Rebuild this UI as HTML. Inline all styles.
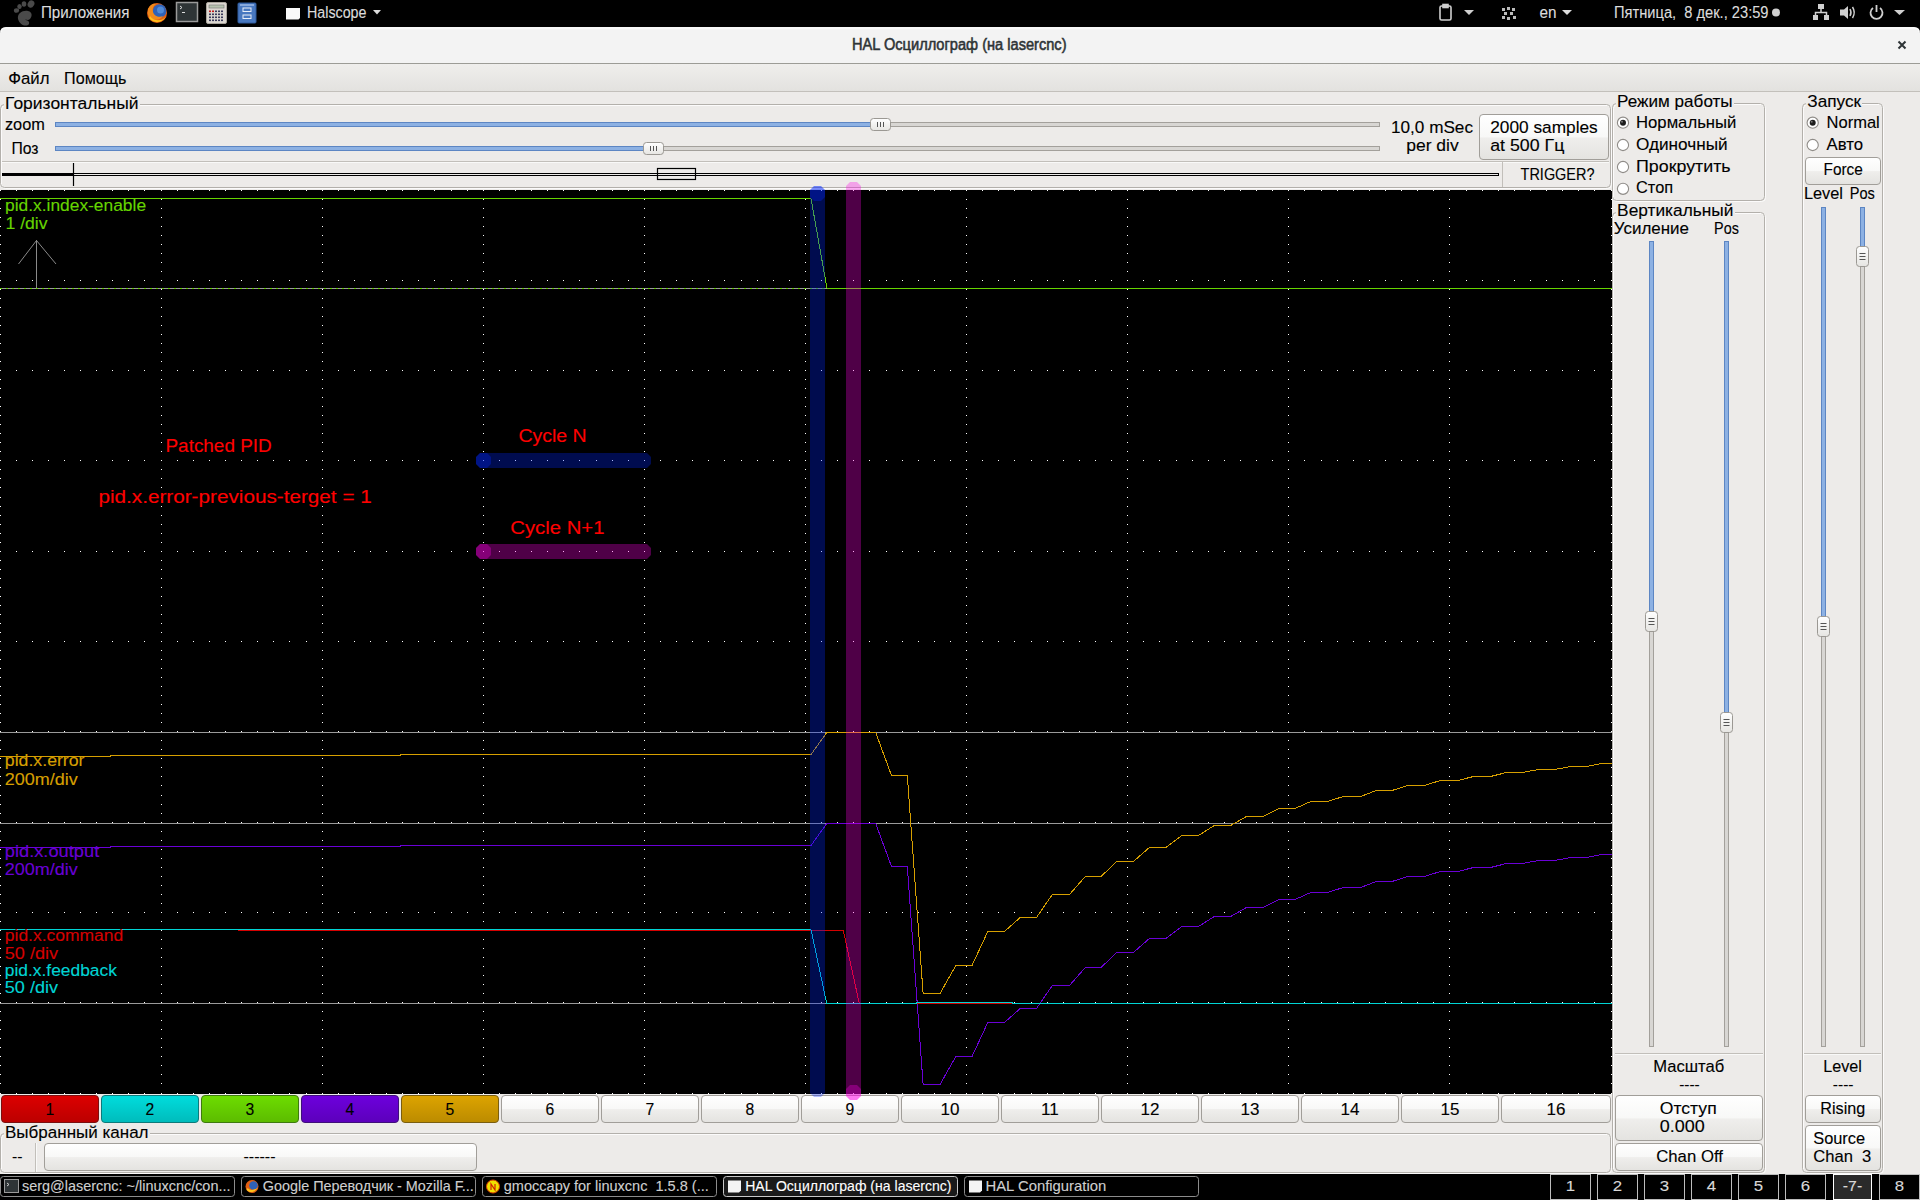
<!DOCTYPE html>
<html><head><meta charset="utf-8"><title>HAL Осциллограф</title>
<style>html,body{margin:0;padding:0;background:#000;overflow:hidden}svg{display:block;font-family:"Liberation Sans",sans-serif}</style>
</head><body>
<svg width="1920" height="1200" viewBox="0 0 1920 1200" shape-rendering="auto">
<defs>
<linearGradient id="gbtn" x1="0" y1="0" x2="0" y2="1">
 <stop offset="0" stop-color="#ffffff"/><stop offset="0.5" stop-color="#f8f8f7"/>
 <stop offset="0.52" stop-color="#efeeec"/><stop offset="1" stop-color="#e4e3e0"/></linearGradient>
<linearGradient id="ghandle" x1="0" y1="0" x2="0" y2="1">
 <stop offset="0" stop-color="#ffffff"/><stop offset="1" stop-color="#e6e5e2"/></linearGradient>
<linearGradient id="gmenu" x1="0" y1="0" x2="0" y2="1">
 <stop offset="0" stop-color="#efeeec"/><stop offset="1" stop-color="#e3e2df"/></linearGradient>
<linearGradient id="gc1" x1="0" y1="0" x2="0" y2="1"><stop offset="0" stop-color="#dd0000"/><stop offset="1" stop-color="#bb0000"/></linearGradient>
<linearGradient id="gc2" x1="0" y1="0" x2="0" y2="1"><stop offset="0" stop-color="#00dddd"/><stop offset="1" stop-color="#00bbbb"/></linearGradient>
<linearGradient id="gc3" x1="0" y1="0" x2="0" y2="1"><stop offset="0" stop-color="#6ddd00"/><stop offset="1" stop-color="#5cbb00"/></linearGradient>
<linearGradient id="gc4" x1="0" y1="0" x2="0" y2="1"><stop offset="0" stop-color="#6d00dd"/><stop offset="1" stop-color="#5c00bb"/></linearGradient>
<linearGradient id="gc5" x1="0" y1="0" x2="0" y2="1"><stop offset="0" stop-color="#dda400"/><stop offset="1" stop-color="#bb8b00"/></linearGradient>
</defs>
<rect x="0" y="0" width="1920" height="27" fill="#000" />
<g fill="#4a4a4a"><ellipse cx="16.5" cy="10.5" rx="2.6" ry="2.3"/><ellipse cx="19.5" cy="6.5" rx="2.2" ry="2.6"/><ellipse cx="24" cy="4" rx="2.3" ry="2.7"/><ellipse cx="31" cy="4" rx="3.2" ry="3.8" transform="rotate(30 31 4)"/><path d="M18 19 C17 13 23 10 28 11 C33 12 32 17 30 19 C28 21 26 19 25 20 C27 20 30 21 29 24 C27 27 20 26 18 19 Z"/></g>
<text x="41.00" y="18.00" font-size="16" fill="#dcdcdc" stroke="#dcdcdc" stroke-width="0.12" textLength="88.51" lengthAdjust="spacingAndGlyphs" style="white-space:pre" >Приложения</text>
<circle cx="157" cy="13" r="10" fill="#e35f12"/><circle cx="159.5" cy="11" r="6.8" fill="#2f62b8"/><circle cx="160.5" cy="10" r="3.5" fill="#4f8ad8"/><path d="M148 9 C150 4 154 3 156 4 C153 6 152 9 153 12 C154 16 159 18 163 16 C160 21 151 21 148 15 Z" fill="#f08a1c"/><path d="M149 18 C153 23 161 24 166 17 C162 21 154 22 150 16Z" fill="#ffc21a"/>
<rect x="176.5" y="2.5" width="21" height="19" fill="#2e3436" stroke="#9a9a9a" stroke-width="1.5"/><path d="M180 6 L182 7.5 L180 9" stroke="#ddd" fill="none"/><line x1="182" y1="12.5" x2="185" y2="12.5" stroke="#ddd"/>
<rect x="206.5" y="2.5" width="20" height="21" rx="1.5" fill="#dcd8d2" stroke="#a9a49c"/><rect x="209" y="5" width="15" height="3" fill="#b7c3b0" stroke="#777" stroke-width="0.6"/>
<rect x="209" y="10.5" width="2" height="1.6" fill="#c01818"/>
<rect x="212" y="10.5" width="2" height="1.6" fill="#c01818"/>
<rect x="215" y="10.5" width="2" height="1.6" fill="#3a3a5a"/>
<rect x="218" y="10.5" width="2" height="1.6" fill="#3a3a5a"/>
<rect x="221" y="10.5" width="2" height="1.6" fill="#3a3a5a"/>
<rect x="209" y="13.5" width="2" height="1.6" fill="#3a3a5a"/>
<rect x="212" y="13.5" width="2" height="1.6" fill="#3a3a5a"/>
<rect x="215" y="13.5" width="2" height="1.6" fill="#3a3a5a"/>
<rect x="218" y="13.5" width="2" height="1.6" fill="#3a3a5a"/>
<rect x="221" y="13.5" width="2" height="1.6" fill="#3a3a5a"/>
<rect x="209" y="16.5" width="2" height="1.6" fill="#3a3a5a"/>
<rect x="212" y="16.5" width="2" height="1.6" fill="#3a3a5a"/>
<rect x="215" y="16.5" width="2" height="1.6" fill="#3a3a5a"/>
<rect x="218" y="16.5" width="2" height="1.6" fill="#3a3a5a"/>
<rect x="221" y="16.5" width="2" height="1.6" fill="#3a3a5a"/>
<rect x="209" y="19.5" width="2" height="1.6" fill="#3a3a5a"/>
<rect x="212" y="19.5" width="2" height="1.6" fill="#3a3a5a"/>
<rect x="215" y="19.5" width="2" height="1.6" fill="#3a3a5a"/>
<rect x="218" y="19.5" width="2" height="1.6" fill="#3a3a5a"/>
<rect x="221" y="19.5" width="2" height="1.6" fill="#3a3a5a"/>
<rect x="238" y="3" width="18" height="20" rx="1" fill="#4878c0" stroke="#2e5a9c"/><rect x="240" y="4" width="14" height="2" fill="#86a8dc"/><rect x="243" y="8" width="8" height="3.5" fill="none" stroke="#e8eef8"/><rect x="243" y="15" width="8" height="3.5" fill="none" stroke="#e8eef8"/>
<path d="M286 8 H300 V18 L298.5 19.5 H286 Z" fill="#fafafa"/>
<text x="307.00" y="18.00" font-size="16" fill="#dcdcdc" stroke="#dcdcdc" stroke-width="0.12" textLength="59.50" lengthAdjust="spacingAndGlyphs" style="white-space:pre" >Halscope</text>
<path d="M373 10 H381 L377 14.5 Z" fill="#dcdcdc"/>
<g fill="none" stroke="#cfcfcf" stroke-width="1.6"><rect x="1440" y="6" width="11" height="14" rx="1.5"/><rect x="1443" y="4.5" width="5" height="3" fill="#cfcfcf"/></g>
<path d="M1464 10 H1474 L1469 15 Z" fill="#cfcfcf"/>
<rect x="1502" y="8" width="3" height="3" fill="#bbbbbb" />
<rect x="1507" y="7" width="3" height="3" fill="#bbbbbb" />
<rect x="1512" y="8" width="3" height="3" fill="#bbbbbb" />
<rect x="1504" y="12" width="3" height="3" fill="#bbbbbb" />
<rect x="1510" y="12" width="3" height="3" fill="#bbbbbb" />
<rect x="1502" y="16" width="3" height="3" fill="#bbbbbb" />
<rect x="1507" y="17" width="3" height="3" fill="#bbbbbb" />
<rect x="1513" y="16" width="3" height="3" fill="#bbbbbb" />
<text x="1539.50" y="18.00" font-size="16" fill="#dcdcdc" stroke="#dcdcdc" stroke-width="0.12" textLength="17.00" lengthAdjust="spacingAndGlyphs" style="white-space:pre" >en</text>
<path d="M1562 10 H1572 L1567 15 Z" fill="#dcdcdc"/>
<text x="1614.00" y="18.00" font-size="16" fill="#dcdcdc" stroke="#dcdcdc" stroke-width="0.12" textLength="154.52" lengthAdjust="spacingAndGlyphs" style="white-space:pre" >Пятница,  8 дек., 23:59</text>
<circle cx="1776" cy="12.5" r="4" fill="#d0d0d0"/>
<g fill="#d0d0d0"><rect x="1818" y="4" width="6" height="5"/><rect x="1813" y="15" width="5" height="5"/><rect x="1824" y="15" width="5" height="5"/></g><path d="M1821 9 V12.5 M1815.5 15 V12.5 H1826.5 V15" stroke="#d0d0d0" fill="none" stroke-width="1.5"/>
<path d="M1840 9.5 H1844 L1848 6 V19 L1844 15.5 H1840Z" fill="#d0d0d0"/><path d="M1850 9 Q1852 12.5 1850 16 M1852.5 7 Q1856 12.5 1852.5 18" stroke="#d0d0d0" fill="none" stroke-width="1.5"/>
<path d="M1873 8 A6 6 0 1 0 1880 8" stroke="#d0d0d0" fill="none" stroke-width="1.8"/><line x1="1876.5" y1="5" x2="1876.5" y2="12" stroke="#d0d0d0" stroke-width="1.8"/>
<path d="M1894 10 H1905 L1899.5 15 Z" fill="#d0d0d0"/>
<rect x="0" y="63" width="1920" height="1111" fill="#edebe9" />
<path d="M0 33 Q0 27 6 27 H1914 Q1920 27 1920 33 V63 H0 Z" fill="#f3f3f3"/>
<path d="M1 32 Q1 28 6 28 H1914 Q1919 28 1919 32" stroke="#ffffff" fill="none"/>
<line x1="0" y1="63.5" x2="1920" y2="63.5" stroke="#9c9c96" stroke-width="1" />
<text x="852.00" y="50.30" font-size="16" fill="#2e3436" stroke="#2e3436" stroke-width="0.55" textLength="214.53" lengthAdjust="spacingAndGlyphs" style="white-space:pre" >HAL Осциллограф (на lasercnc)</text>
<path d="M1898.5 41.5 L1905.5 48.5 M1905.5 41.5 L1898.5 48.5" stroke="#2e3436" stroke-width="2"/>
<rect x="0" y="64" width="1920" height="27" fill="url(#gmenu)" />
<line x1="0" y1="91.5" x2="1920" y2="91.5" stroke="#c3c0bb" stroke-width="1" />
<text x="8.25" y="83.75" font-size="17" fill="#000" stroke="#000" stroke-width="0.12" textLength="41.25" lengthAdjust="spacingAndGlyphs" style="white-space:pre" >Файл</text>
<text x="64.10" y="83.75" font-size="17" fill="#000" stroke="#000" stroke-width="0.12" textLength="62.36" lengthAdjust="spacingAndGlyphs" style="white-space:pre" >Помощь</text>
<rect x="1.5" y="105.5" width="1610.0" height="83.0" rx="4" fill="none" stroke="#fff" opacity="0.8"/>
<rect x="0.5" y="104.5" width="1610.0" height="83.0" rx="4" fill="none" stroke="#b3b0ab"/>
<rect x="4" y="95" width="136" height="12" fill="#edebe9" />
<text x="5.10" y="108.75" font-size="17" fill="#000" stroke="#000" stroke-width="0.12" textLength="133.45" lengthAdjust="spacingAndGlyphs" style="white-space:pre" >Горизонтальный</text>
<text x="4.90" y="130.00" font-size="17" fill="#000" stroke="#000" stroke-width="0.12" textLength="39.97" lengthAdjust="spacingAndGlyphs" style="white-space:pre" >zoom</text>
<text x="11.50" y="153.75" font-size="17" fill="#000" stroke="#000" stroke-width="0.12" textLength="27.08" lengthAdjust="spacingAndGlyphs" style="white-space:pre" >Поз</text>
<rect x="55.5" y="122.5" width="1324.0" height="4" fill="#d8d6d3" stroke="#a3a09b"/>
<rect x="55.5" y="122.5" width="815.0" height="4" fill="#8db1e3" stroke="#5d86c3"/>
<rect x="870.5" y="118.5" width="20.0" height="12.0" rx="3" fill="url(#ghandle)" stroke="#9b9893"/>
<line x1="877.5" y1="122" x2="877.5" y2="127" stroke="#555" stroke-width="1" />
<line x1="880.5" y1="122" x2="880.5" y2="127" stroke="#555" stroke-width="1" />
<line x1="883.5" y1="122" x2="883.5" y2="127" stroke="#555" stroke-width="1" />
<rect x="55.5" y="146.5" width="1324.0" height="4" fill="#d8d6d3" stroke="#a3a09b"/>
<rect x="55.5" y="146.5" width="588.0" height="4" fill="#8db1e3" stroke="#5d86c3"/>
<rect x="643.5" y="142.5" width="20.0" height="12.0" rx="3" fill="url(#ghandle)" stroke="#9b9893"/>
<line x1="650.5" y1="146" x2="650.5" y2="151" stroke="#555" stroke-width="1" />
<line x1="653.5" y1="146" x2="653.5" y2="151" stroke="#555" stroke-width="1" />
<line x1="656.5" y1="146" x2="656.5" y2="151" stroke="#555" stroke-width="1" />
<text x="1391.00" y="133.00" font-size="17" fill="#000" stroke="#000" stroke-width="0.12" textLength="81.97" lengthAdjust="spacingAndGlyphs" style="white-space:pre" >10,0 mSec</text>
<text x="1406.20" y="150.50" font-size="17" fill="#000" stroke="#000" stroke-width="0.12" textLength="52.53" lengthAdjust="spacingAndGlyphs" style="white-space:pre" >per div</text>
<rect x="1479.5" y="114.5" width="129.0" height="45.0" rx="3.5" fill="url(#gbtn)" stroke="#a19e99"/>
<text x="1490.20" y="132.90" font-size="17" fill="#000" stroke="#000" stroke-width="0.12" textLength="107.54" lengthAdjust="spacingAndGlyphs" style="white-space:pre" >2000 samples</text>
<text x="1490.20" y="150.50" font-size="17" fill="#000" stroke="#000" stroke-width="0.12" textLength="74.13" lengthAdjust="spacingAndGlyphs" style="white-space:pre" >at 500 Гц</text>
<line x1="2" y1="161.5" x2="1609" y2="161.5" stroke="#c2bfba" stroke-width="1" />
<line x1="2" y1="162.5" x2="1609" y2="162.5" stroke="#ffffff" stroke-width="1" opacity="0.7"/>
<line x1="1502.5" y1="162" x2="1502.5" y2="187" stroke="#c2bfba" stroke-width="1" />
<text x="1520.60" y="179.60" font-size="17" fill="#000" stroke="#000" stroke-width="0.12" textLength="73.90" lengthAdjust="spacingAndGlyphs" style="white-space:pre" >TRIGGER?</text>
<rect x="2" y="173" width="71" height="3" fill="#000" />
<rect x="73.5" y="173.5" width="1425" height="2" fill="none" stroke="#000"/>
<line x1="73.5" y1="163" x2="73.5" y2="186" stroke="#000" stroke-width="1.2" />
<rect x="657.5" y="168.5" width="38" height="11" fill="none" stroke="#000" stroke-width="1.2"/>
<rect x="0" y="190" width="1612" height="904" fill="#000" />
<path d="M0 190h1v1h-1zM0 199h1v1h-1zM0 208h1v1h-1zM0 217h1v1h-1zM0 226h1v1h-1zM0 235h1v1h-1zM0 244h1v1h-1zM0 253h1v1h-1zM0 262h1v1h-1zM0 271h1v1h-1zM0 280h1v1h-1zM0 289h1v1h-1zM0 298h1v1h-1zM0 307h1v1h-1zM0 316h1v1h-1zM0 325h1v1h-1zM0 334h1v1h-1zM0 343h1v1h-1zM0 352h1v1h-1zM0 361h1v1h-1zM0 370h1v1h-1zM0 379h1v1h-1zM0 388h1v1h-1zM0 397h1v1h-1zM0 406h1v1h-1zM0 415h1v1h-1zM0 424h1v1h-1zM0 433h1v1h-1zM0 442h1v1h-1zM0 451h1v1h-1zM0 460h1v1h-1zM0 469h1v1h-1zM0 478h1v1h-1zM0 487h1v1h-1zM0 497h1v1h-1zM0 506h1v1h-1zM0 515h1v1h-1zM0 524h1v1h-1zM0 533h1v1h-1zM0 542h1v1h-1zM0 551h1v1h-1zM0 560h1v1h-1zM0 569h1v1h-1zM0 578h1v1h-1zM0 587h1v1h-1zM0 596h1v1h-1zM0 605h1v1h-1zM0 614h1v1h-1zM0 623h1v1h-1zM0 632h1v1h-1zM0 641h1v1h-1zM0 650h1v1h-1zM0 659h1v1h-1zM0 668h1v1h-1zM0 677h1v1h-1zM0 686h1v1h-1zM0 695h1v1h-1zM0 704h1v1h-1zM0 713h1v1h-1zM0 722h1v1h-1zM0 731h1v1h-1zM0 740h1v1h-1zM0 749h1v1h-1zM0 758h1v1h-1zM0 767h1v1h-1zM0 776h1v1h-1zM0 785h1v1h-1zM0 795h1v1h-1zM0 804h1v1h-1zM0 813h1v1h-1zM0 822h1v1h-1zM0 831h1v1h-1zM0 840h1v1h-1zM0 849h1v1h-1zM0 858h1v1h-1zM0 867h1v1h-1zM0 876h1v1h-1zM0 885h1v1h-1zM0 894h1v1h-1zM0 903h1v1h-1zM0 912h1v1h-1zM0 921h1v1h-1zM0 930h1v1h-1zM0 939h1v1h-1zM0 948h1v1h-1zM0 957h1v1h-1zM0 966h1v1h-1zM0 975h1v1h-1zM0 984h1v1h-1zM0 993h1v1h-1zM0 1002h1v1h-1zM0 1011h1v1h-1zM0 1020h1v1h-1zM0 1029h1v1h-1zM0 1038h1v1h-1zM0 1047h1v1h-1zM0 1056h1v1h-1zM0 1065h1v1h-1zM0 1074h1v1h-1zM0 1083h1v1h-1zM0 1093h1v1h-1zM16 190h1v1h-1zM16 280h1v1h-1zM16 370h1v1h-1zM16 460h1v1h-1zM16 551h1v1h-1zM16 641h1v1h-1zM16 731h1v1h-1zM16 822h1v1h-1zM16 912h1v1h-1zM16 1002h1v1h-1zM16 1093h1v1h-1zM32 190h1v1h-1zM32 280h1v1h-1zM32 370h1v1h-1zM32 460h1v1h-1zM32 551h1v1h-1zM32 641h1v1h-1zM32 731h1v1h-1zM32 822h1v1h-1zM32 912h1v1h-1zM32 1002h1v1h-1zM32 1093h1v1h-1zM48 190h1v1h-1zM48 280h1v1h-1zM48 370h1v1h-1zM48 460h1v1h-1zM48 551h1v1h-1zM48 641h1v1h-1zM48 731h1v1h-1zM48 822h1v1h-1zM48 912h1v1h-1zM48 1002h1v1h-1zM48 1093h1v1h-1zM64 190h1v1h-1zM64 280h1v1h-1zM64 370h1v1h-1zM64 460h1v1h-1zM64 551h1v1h-1zM64 641h1v1h-1zM64 731h1v1h-1zM64 822h1v1h-1zM64 912h1v1h-1zM64 1002h1v1h-1zM64 1093h1v1h-1zM80 190h1v1h-1zM80 280h1v1h-1zM80 370h1v1h-1zM80 460h1v1h-1zM80 551h1v1h-1zM80 641h1v1h-1zM80 731h1v1h-1zM80 822h1v1h-1zM80 912h1v1h-1zM80 1002h1v1h-1zM80 1093h1v1h-1zM96 190h1v1h-1zM96 280h1v1h-1zM96 370h1v1h-1zM96 460h1v1h-1zM96 551h1v1h-1zM96 641h1v1h-1zM96 731h1v1h-1zM96 822h1v1h-1zM96 912h1v1h-1zM96 1002h1v1h-1zM96 1093h1v1h-1zM112 190h1v1h-1zM112 280h1v1h-1zM112 370h1v1h-1zM112 460h1v1h-1zM112 551h1v1h-1zM112 641h1v1h-1zM112 731h1v1h-1zM112 822h1v1h-1zM112 912h1v1h-1zM112 1002h1v1h-1zM112 1093h1v1h-1zM128 190h1v1h-1zM128 280h1v1h-1zM128 370h1v1h-1zM128 460h1v1h-1zM128 551h1v1h-1zM128 641h1v1h-1zM128 731h1v1h-1zM128 822h1v1h-1zM128 912h1v1h-1zM128 1002h1v1h-1zM128 1093h1v1h-1zM144 190h1v1h-1zM144 280h1v1h-1zM144 370h1v1h-1zM144 460h1v1h-1zM144 551h1v1h-1zM144 641h1v1h-1zM144 731h1v1h-1zM144 822h1v1h-1zM144 912h1v1h-1zM144 1002h1v1h-1zM144 1093h1v1h-1zM161 190h1v1h-1zM161 199h1v1h-1zM161 208h1v1h-1zM161 217h1v1h-1zM161 226h1v1h-1zM161 235h1v1h-1zM161 244h1v1h-1zM161 253h1v1h-1zM161 262h1v1h-1zM161 271h1v1h-1zM161 280h1v1h-1zM161 289h1v1h-1zM161 298h1v1h-1zM161 307h1v1h-1zM161 316h1v1h-1zM161 325h1v1h-1zM161 334h1v1h-1zM161 343h1v1h-1zM161 352h1v1h-1zM161 361h1v1h-1zM161 370h1v1h-1zM161 379h1v1h-1zM161 388h1v1h-1zM161 397h1v1h-1zM161 406h1v1h-1zM161 415h1v1h-1zM161 424h1v1h-1zM161 433h1v1h-1zM161 442h1v1h-1zM161 451h1v1h-1zM161 460h1v1h-1zM161 469h1v1h-1zM161 478h1v1h-1zM161 487h1v1h-1zM161 497h1v1h-1zM161 506h1v1h-1zM161 515h1v1h-1zM161 524h1v1h-1zM161 533h1v1h-1zM161 542h1v1h-1zM161 551h1v1h-1zM161 560h1v1h-1zM161 569h1v1h-1zM161 578h1v1h-1zM161 587h1v1h-1zM161 596h1v1h-1zM161 605h1v1h-1zM161 614h1v1h-1zM161 623h1v1h-1zM161 632h1v1h-1zM161 641h1v1h-1zM161 650h1v1h-1zM161 659h1v1h-1zM161 668h1v1h-1zM161 677h1v1h-1zM161 686h1v1h-1zM161 695h1v1h-1zM161 704h1v1h-1zM161 713h1v1h-1zM161 722h1v1h-1zM161 731h1v1h-1zM161 740h1v1h-1zM161 749h1v1h-1zM161 758h1v1h-1zM161 767h1v1h-1zM161 776h1v1h-1zM161 785h1v1h-1zM161 795h1v1h-1zM161 804h1v1h-1zM161 813h1v1h-1zM161 822h1v1h-1zM161 831h1v1h-1zM161 840h1v1h-1zM161 849h1v1h-1zM161 858h1v1h-1zM161 867h1v1h-1zM161 876h1v1h-1zM161 885h1v1h-1zM161 894h1v1h-1zM161 903h1v1h-1zM161 912h1v1h-1zM161 921h1v1h-1zM161 930h1v1h-1zM161 939h1v1h-1zM161 948h1v1h-1zM161 957h1v1h-1zM161 966h1v1h-1zM161 975h1v1h-1zM161 984h1v1h-1zM161 993h1v1h-1zM161 1002h1v1h-1zM161 1011h1v1h-1zM161 1020h1v1h-1zM161 1029h1v1h-1zM161 1038h1v1h-1zM161 1047h1v1h-1zM161 1056h1v1h-1zM161 1065h1v1h-1zM161 1074h1v1h-1zM161 1083h1v1h-1zM161 1093h1v1h-1zM177 190h1v1h-1zM177 280h1v1h-1zM177 370h1v1h-1zM177 460h1v1h-1zM177 551h1v1h-1zM177 641h1v1h-1zM177 731h1v1h-1zM177 822h1v1h-1zM177 912h1v1h-1zM177 1002h1v1h-1zM177 1093h1v1h-1zM193 190h1v1h-1zM193 280h1v1h-1zM193 370h1v1h-1zM193 460h1v1h-1zM193 551h1v1h-1zM193 641h1v1h-1zM193 731h1v1h-1zM193 822h1v1h-1zM193 912h1v1h-1zM193 1002h1v1h-1zM193 1093h1v1h-1zM209 190h1v1h-1zM209 280h1v1h-1zM209 370h1v1h-1zM209 460h1v1h-1zM209 551h1v1h-1zM209 641h1v1h-1zM209 731h1v1h-1zM209 822h1v1h-1zM209 912h1v1h-1zM209 1002h1v1h-1zM209 1093h1v1h-1zM225 190h1v1h-1zM225 280h1v1h-1zM225 370h1v1h-1zM225 460h1v1h-1zM225 551h1v1h-1zM225 641h1v1h-1zM225 731h1v1h-1zM225 822h1v1h-1zM225 912h1v1h-1zM225 1002h1v1h-1zM225 1093h1v1h-1zM241 190h1v1h-1zM241 280h1v1h-1zM241 370h1v1h-1zM241 460h1v1h-1zM241 551h1v1h-1zM241 641h1v1h-1zM241 731h1v1h-1zM241 822h1v1h-1zM241 912h1v1h-1zM241 1002h1v1h-1zM241 1093h1v1h-1zM257 190h1v1h-1zM257 280h1v1h-1zM257 370h1v1h-1zM257 460h1v1h-1zM257 551h1v1h-1zM257 641h1v1h-1zM257 731h1v1h-1zM257 822h1v1h-1zM257 912h1v1h-1zM257 1002h1v1h-1zM257 1093h1v1h-1zM273 190h1v1h-1zM273 280h1v1h-1zM273 370h1v1h-1zM273 460h1v1h-1zM273 551h1v1h-1zM273 641h1v1h-1zM273 731h1v1h-1zM273 822h1v1h-1zM273 912h1v1h-1zM273 1002h1v1h-1zM273 1093h1v1h-1zM289 190h1v1h-1zM289 280h1v1h-1zM289 370h1v1h-1zM289 460h1v1h-1zM289 551h1v1h-1zM289 641h1v1h-1zM289 731h1v1h-1zM289 822h1v1h-1zM289 912h1v1h-1zM289 1002h1v1h-1zM289 1093h1v1h-1zM306 190h1v1h-1zM306 280h1v1h-1zM306 370h1v1h-1zM306 460h1v1h-1zM306 551h1v1h-1zM306 641h1v1h-1zM306 731h1v1h-1zM306 822h1v1h-1zM306 912h1v1h-1zM306 1002h1v1h-1zM306 1093h1v1h-1zM322 190h1v1h-1zM322 199h1v1h-1zM322 208h1v1h-1zM322 217h1v1h-1zM322 226h1v1h-1zM322 235h1v1h-1zM322 244h1v1h-1zM322 253h1v1h-1zM322 262h1v1h-1zM322 271h1v1h-1zM322 280h1v1h-1zM322 289h1v1h-1zM322 298h1v1h-1zM322 307h1v1h-1zM322 316h1v1h-1zM322 325h1v1h-1zM322 334h1v1h-1zM322 343h1v1h-1zM322 352h1v1h-1zM322 361h1v1h-1zM322 370h1v1h-1zM322 379h1v1h-1zM322 388h1v1h-1zM322 397h1v1h-1zM322 406h1v1h-1zM322 415h1v1h-1zM322 424h1v1h-1zM322 433h1v1h-1zM322 442h1v1h-1zM322 451h1v1h-1zM322 460h1v1h-1zM322 469h1v1h-1zM322 478h1v1h-1zM322 487h1v1h-1zM322 497h1v1h-1zM322 506h1v1h-1zM322 515h1v1h-1zM322 524h1v1h-1zM322 533h1v1h-1zM322 542h1v1h-1zM322 551h1v1h-1zM322 560h1v1h-1zM322 569h1v1h-1zM322 578h1v1h-1zM322 587h1v1h-1zM322 596h1v1h-1zM322 605h1v1h-1zM322 614h1v1h-1zM322 623h1v1h-1zM322 632h1v1h-1zM322 641h1v1h-1zM322 650h1v1h-1zM322 659h1v1h-1zM322 668h1v1h-1zM322 677h1v1h-1zM322 686h1v1h-1zM322 695h1v1h-1zM322 704h1v1h-1zM322 713h1v1h-1zM322 722h1v1h-1zM322 731h1v1h-1zM322 740h1v1h-1zM322 749h1v1h-1zM322 758h1v1h-1zM322 767h1v1h-1zM322 776h1v1h-1zM322 785h1v1h-1zM322 795h1v1h-1zM322 804h1v1h-1zM322 813h1v1h-1zM322 822h1v1h-1zM322 831h1v1h-1zM322 840h1v1h-1zM322 849h1v1h-1zM322 858h1v1h-1zM322 867h1v1h-1zM322 876h1v1h-1zM322 885h1v1h-1zM322 894h1v1h-1zM322 903h1v1h-1zM322 912h1v1h-1zM322 921h1v1h-1zM322 930h1v1h-1zM322 939h1v1h-1zM322 948h1v1h-1zM322 957h1v1h-1zM322 966h1v1h-1zM322 975h1v1h-1zM322 984h1v1h-1zM322 993h1v1h-1zM322 1002h1v1h-1zM322 1011h1v1h-1zM322 1020h1v1h-1zM322 1029h1v1h-1zM322 1038h1v1h-1zM322 1047h1v1h-1zM322 1056h1v1h-1zM322 1065h1v1h-1zM322 1074h1v1h-1zM322 1083h1v1h-1zM322 1093h1v1h-1zM338 190h1v1h-1zM338 280h1v1h-1zM338 370h1v1h-1zM338 460h1v1h-1zM338 551h1v1h-1zM338 641h1v1h-1zM338 731h1v1h-1zM338 822h1v1h-1zM338 912h1v1h-1zM338 1002h1v1h-1zM338 1093h1v1h-1zM354 190h1v1h-1zM354 280h1v1h-1zM354 370h1v1h-1zM354 460h1v1h-1zM354 551h1v1h-1zM354 641h1v1h-1zM354 731h1v1h-1zM354 822h1v1h-1zM354 912h1v1h-1zM354 1002h1v1h-1zM354 1093h1v1h-1zM370 190h1v1h-1zM370 280h1v1h-1zM370 370h1v1h-1zM370 460h1v1h-1zM370 551h1v1h-1zM370 641h1v1h-1zM370 731h1v1h-1zM370 822h1v1h-1zM370 912h1v1h-1zM370 1002h1v1h-1zM370 1093h1v1h-1zM386 190h1v1h-1zM386 280h1v1h-1zM386 370h1v1h-1zM386 460h1v1h-1zM386 551h1v1h-1zM386 641h1v1h-1zM386 731h1v1h-1zM386 822h1v1h-1zM386 912h1v1h-1zM386 1002h1v1h-1zM386 1093h1v1h-1zM402 190h1v1h-1zM402 280h1v1h-1zM402 370h1v1h-1zM402 460h1v1h-1zM402 551h1v1h-1zM402 641h1v1h-1zM402 731h1v1h-1zM402 822h1v1h-1zM402 912h1v1h-1zM402 1002h1v1h-1zM402 1093h1v1h-1zM418 190h1v1h-1zM418 280h1v1h-1zM418 370h1v1h-1zM418 460h1v1h-1zM418 551h1v1h-1zM418 641h1v1h-1zM418 731h1v1h-1zM418 822h1v1h-1zM418 912h1v1h-1zM418 1002h1v1h-1zM418 1093h1v1h-1zM434 190h1v1h-1zM434 280h1v1h-1zM434 370h1v1h-1zM434 460h1v1h-1zM434 551h1v1h-1zM434 641h1v1h-1zM434 731h1v1h-1zM434 822h1v1h-1zM434 912h1v1h-1zM434 1002h1v1h-1zM434 1093h1v1h-1zM451 190h1v1h-1zM451 280h1v1h-1zM451 370h1v1h-1zM451 460h1v1h-1zM451 551h1v1h-1zM451 641h1v1h-1zM451 731h1v1h-1zM451 822h1v1h-1zM451 912h1v1h-1zM451 1002h1v1h-1zM451 1093h1v1h-1zM467 190h1v1h-1zM467 280h1v1h-1zM467 370h1v1h-1zM467 460h1v1h-1zM467 551h1v1h-1zM467 641h1v1h-1zM467 731h1v1h-1zM467 822h1v1h-1zM467 912h1v1h-1zM467 1002h1v1h-1zM467 1093h1v1h-1zM483 190h1v1h-1zM483 199h1v1h-1zM483 208h1v1h-1zM483 217h1v1h-1zM483 226h1v1h-1zM483 235h1v1h-1zM483 244h1v1h-1zM483 253h1v1h-1zM483 262h1v1h-1zM483 271h1v1h-1zM483 280h1v1h-1zM483 289h1v1h-1zM483 298h1v1h-1zM483 307h1v1h-1zM483 316h1v1h-1zM483 325h1v1h-1zM483 334h1v1h-1zM483 343h1v1h-1zM483 352h1v1h-1zM483 361h1v1h-1zM483 370h1v1h-1zM483 379h1v1h-1zM483 388h1v1h-1zM483 397h1v1h-1zM483 406h1v1h-1zM483 415h1v1h-1zM483 424h1v1h-1zM483 433h1v1h-1zM483 442h1v1h-1zM483 451h1v1h-1zM483 460h1v1h-1zM483 469h1v1h-1zM483 478h1v1h-1zM483 487h1v1h-1zM483 497h1v1h-1zM483 506h1v1h-1zM483 515h1v1h-1zM483 524h1v1h-1zM483 533h1v1h-1zM483 542h1v1h-1zM483 551h1v1h-1zM483 560h1v1h-1zM483 569h1v1h-1zM483 578h1v1h-1zM483 587h1v1h-1zM483 596h1v1h-1zM483 605h1v1h-1zM483 614h1v1h-1zM483 623h1v1h-1zM483 632h1v1h-1zM483 641h1v1h-1zM483 650h1v1h-1zM483 659h1v1h-1zM483 668h1v1h-1zM483 677h1v1h-1zM483 686h1v1h-1zM483 695h1v1h-1zM483 704h1v1h-1zM483 713h1v1h-1zM483 722h1v1h-1zM483 731h1v1h-1zM483 740h1v1h-1zM483 749h1v1h-1zM483 758h1v1h-1zM483 767h1v1h-1zM483 776h1v1h-1zM483 785h1v1h-1zM483 795h1v1h-1zM483 804h1v1h-1zM483 813h1v1h-1zM483 822h1v1h-1zM483 831h1v1h-1zM483 840h1v1h-1zM483 849h1v1h-1zM483 858h1v1h-1zM483 867h1v1h-1zM483 876h1v1h-1zM483 885h1v1h-1zM483 894h1v1h-1zM483 903h1v1h-1zM483 912h1v1h-1zM483 921h1v1h-1zM483 930h1v1h-1zM483 939h1v1h-1zM483 948h1v1h-1zM483 957h1v1h-1zM483 966h1v1h-1zM483 975h1v1h-1zM483 984h1v1h-1zM483 993h1v1h-1zM483 1002h1v1h-1zM483 1011h1v1h-1zM483 1020h1v1h-1zM483 1029h1v1h-1zM483 1038h1v1h-1zM483 1047h1v1h-1zM483 1056h1v1h-1zM483 1065h1v1h-1zM483 1074h1v1h-1zM483 1083h1v1h-1zM483 1093h1v1h-1zM499 190h1v1h-1zM499 280h1v1h-1zM499 370h1v1h-1zM499 460h1v1h-1zM499 551h1v1h-1zM499 641h1v1h-1zM499 731h1v1h-1zM499 822h1v1h-1zM499 912h1v1h-1zM499 1002h1v1h-1zM499 1093h1v1h-1zM515 190h1v1h-1zM515 280h1v1h-1zM515 370h1v1h-1zM515 460h1v1h-1zM515 551h1v1h-1zM515 641h1v1h-1zM515 731h1v1h-1zM515 822h1v1h-1zM515 912h1v1h-1zM515 1002h1v1h-1zM515 1093h1v1h-1zM531 190h1v1h-1zM531 280h1v1h-1zM531 370h1v1h-1zM531 460h1v1h-1zM531 551h1v1h-1zM531 641h1v1h-1zM531 731h1v1h-1zM531 822h1v1h-1zM531 912h1v1h-1zM531 1002h1v1h-1zM531 1093h1v1h-1zM547 190h1v1h-1zM547 280h1v1h-1zM547 370h1v1h-1zM547 460h1v1h-1zM547 551h1v1h-1zM547 641h1v1h-1zM547 731h1v1h-1zM547 822h1v1h-1zM547 912h1v1h-1zM547 1002h1v1h-1zM547 1093h1v1h-1zM563 190h1v1h-1zM563 280h1v1h-1zM563 370h1v1h-1zM563 460h1v1h-1zM563 551h1v1h-1zM563 641h1v1h-1zM563 731h1v1h-1zM563 822h1v1h-1zM563 912h1v1h-1zM563 1002h1v1h-1zM563 1093h1v1h-1zM579 190h1v1h-1zM579 280h1v1h-1zM579 370h1v1h-1zM579 460h1v1h-1zM579 551h1v1h-1zM579 641h1v1h-1zM579 731h1v1h-1zM579 822h1v1h-1zM579 912h1v1h-1zM579 1002h1v1h-1zM579 1093h1v1h-1zM596 190h1v1h-1zM596 280h1v1h-1zM596 370h1v1h-1zM596 460h1v1h-1zM596 551h1v1h-1zM596 641h1v1h-1zM596 731h1v1h-1zM596 822h1v1h-1zM596 912h1v1h-1zM596 1002h1v1h-1zM596 1093h1v1h-1zM612 190h1v1h-1zM612 280h1v1h-1zM612 370h1v1h-1zM612 460h1v1h-1zM612 551h1v1h-1zM612 641h1v1h-1zM612 731h1v1h-1zM612 822h1v1h-1zM612 912h1v1h-1zM612 1002h1v1h-1zM612 1093h1v1h-1zM628 190h1v1h-1zM628 280h1v1h-1zM628 370h1v1h-1zM628 460h1v1h-1zM628 551h1v1h-1zM628 641h1v1h-1zM628 731h1v1h-1zM628 822h1v1h-1zM628 912h1v1h-1zM628 1002h1v1h-1zM628 1093h1v1h-1zM644 190h1v1h-1zM644 199h1v1h-1zM644 208h1v1h-1zM644 217h1v1h-1zM644 226h1v1h-1zM644 235h1v1h-1zM644 244h1v1h-1zM644 253h1v1h-1zM644 262h1v1h-1zM644 271h1v1h-1zM644 280h1v1h-1zM644 289h1v1h-1zM644 298h1v1h-1zM644 307h1v1h-1zM644 316h1v1h-1zM644 325h1v1h-1zM644 334h1v1h-1zM644 343h1v1h-1zM644 352h1v1h-1zM644 361h1v1h-1zM644 370h1v1h-1zM644 379h1v1h-1zM644 388h1v1h-1zM644 397h1v1h-1zM644 406h1v1h-1zM644 415h1v1h-1zM644 424h1v1h-1zM644 433h1v1h-1zM644 442h1v1h-1zM644 451h1v1h-1zM644 460h1v1h-1zM644 469h1v1h-1zM644 478h1v1h-1zM644 487h1v1h-1zM644 497h1v1h-1zM644 506h1v1h-1zM644 515h1v1h-1zM644 524h1v1h-1zM644 533h1v1h-1zM644 542h1v1h-1zM644 551h1v1h-1zM644 560h1v1h-1zM644 569h1v1h-1zM644 578h1v1h-1zM644 587h1v1h-1zM644 596h1v1h-1zM644 605h1v1h-1zM644 614h1v1h-1zM644 623h1v1h-1zM644 632h1v1h-1zM644 641h1v1h-1zM644 650h1v1h-1zM644 659h1v1h-1zM644 668h1v1h-1zM644 677h1v1h-1zM644 686h1v1h-1zM644 695h1v1h-1zM644 704h1v1h-1zM644 713h1v1h-1zM644 722h1v1h-1zM644 731h1v1h-1zM644 740h1v1h-1zM644 749h1v1h-1zM644 758h1v1h-1zM644 767h1v1h-1zM644 776h1v1h-1zM644 785h1v1h-1zM644 795h1v1h-1zM644 804h1v1h-1zM644 813h1v1h-1zM644 822h1v1h-1zM644 831h1v1h-1zM644 840h1v1h-1zM644 849h1v1h-1zM644 858h1v1h-1zM644 867h1v1h-1zM644 876h1v1h-1zM644 885h1v1h-1zM644 894h1v1h-1zM644 903h1v1h-1zM644 912h1v1h-1zM644 921h1v1h-1zM644 930h1v1h-1zM644 939h1v1h-1zM644 948h1v1h-1zM644 957h1v1h-1zM644 966h1v1h-1zM644 975h1v1h-1zM644 984h1v1h-1zM644 993h1v1h-1zM644 1002h1v1h-1zM644 1011h1v1h-1zM644 1020h1v1h-1zM644 1029h1v1h-1zM644 1038h1v1h-1zM644 1047h1v1h-1zM644 1056h1v1h-1zM644 1065h1v1h-1zM644 1074h1v1h-1zM644 1083h1v1h-1zM644 1093h1v1h-1zM660 190h1v1h-1zM660 280h1v1h-1zM660 370h1v1h-1zM660 460h1v1h-1zM660 551h1v1h-1zM660 641h1v1h-1zM660 731h1v1h-1zM660 822h1v1h-1zM660 912h1v1h-1zM660 1002h1v1h-1zM660 1093h1v1h-1zM676 190h1v1h-1zM676 280h1v1h-1zM676 370h1v1h-1zM676 460h1v1h-1zM676 551h1v1h-1zM676 641h1v1h-1zM676 731h1v1h-1zM676 822h1v1h-1zM676 912h1v1h-1zM676 1002h1v1h-1zM676 1093h1v1h-1zM692 190h1v1h-1zM692 280h1v1h-1zM692 370h1v1h-1zM692 460h1v1h-1zM692 551h1v1h-1zM692 641h1v1h-1zM692 731h1v1h-1zM692 822h1v1h-1zM692 912h1v1h-1zM692 1002h1v1h-1zM692 1093h1v1h-1zM708 190h1v1h-1zM708 280h1v1h-1zM708 370h1v1h-1zM708 460h1v1h-1zM708 551h1v1h-1zM708 641h1v1h-1zM708 731h1v1h-1zM708 822h1v1h-1zM708 912h1v1h-1zM708 1002h1v1h-1zM708 1093h1v1h-1zM724 190h1v1h-1zM724 280h1v1h-1zM724 370h1v1h-1zM724 460h1v1h-1zM724 551h1v1h-1zM724 641h1v1h-1zM724 731h1v1h-1zM724 822h1v1h-1zM724 912h1v1h-1zM724 1002h1v1h-1zM724 1093h1v1h-1zM741 190h1v1h-1zM741 280h1v1h-1zM741 370h1v1h-1zM741 460h1v1h-1zM741 551h1v1h-1zM741 641h1v1h-1zM741 731h1v1h-1zM741 822h1v1h-1zM741 912h1v1h-1zM741 1002h1v1h-1zM741 1093h1v1h-1zM757 190h1v1h-1zM757 280h1v1h-1zM757 370h1v1h-1zM757 460h1v1h-1zM757 551h1v1h-1zM757 641h1v1h-1zM757 731h1v1h-1zM757 822h1v1h-1zM757 912h1v1h-1zM757 1002h1v1h-1zM757 1093h1v1h-1zM773 190h1v1h-1zM773 280h1v1h-1zM773 370h1v1h-1zM773 460h1v1h-1zM773 551h1v1h-1zM773 641h1v1h-1zM773 731h1v1h-1zM773 822h1v1h-1zM773 912h1v1h-1zM773 1002h1v1h-1zM773 1093h1v1h-1zM789 190h1v1h-1zM789 280h1v1h-1zM789 370h1v1h-1zM789 460h1v1h-1zM789 551h1v1h-1zM789 641h1v1h-1zM789 731h1v1h-1zM789 822h1v1h-1zM789 912h1v1h-1zM789 1002h1v1h-1zM789 1093h1v1h-1zM805 190h1v1h-1zM805 199h1v1h-1zM805 208h1v1h-1zM805 217h1v1h-1zM805 226h1v1h-1zM805 235h1v1h-1zM805 244h1v1h-1zM805 253h1v1h-1zM805 262h1v1h-1zM805 271h1v1h-1zM805 280h1v1h-1zM805 289h1v1h-1zM805 298h1v1h-1zM805 307h1v1h-1zM805 316h1v1h-1zM805 325h1v1h-1zM805 334h1v1h-1zM805 343h1v1h-1zM805 352h1v1h-1zM805 361h1v1h-1zM805 370h1v1h-1zM805 379h1v1h-1zM805 388h1v1h-1zM805 397h1v1h-1zM805 406h1v1h-1zM805 415h1v1h-1zM805 424h1v1h-1zM805 433h1v1h-1zM805 442h1v1h-1zM805 451h1v1h-1zM805 460h1v1h-1zM805 469h1v1h-1zM805 478h1v1h-1zM805 487h1v1h-1zM805 497h1v1h-1zM805 506h1v1h-1zM805 515h1v1h-1zM805 524h1v1h-1zM805 533h1v1h-1zM805 542h1v1h-1zM805 551h1v1h-1zM805 560h1v1h-1zM805 569h1v1h-1zM805 578h1v1h-1zM805 587h1v1h-1zM805 596h1v1h-1zM805 605h1v1h-1zM805 614h1v1h-1zM805 623h1v1h-1zM805 632h1v1h-1zM805 641h1v1h-1zM805 650h1v1h-1zM805 659h1v1h-1zM805 668h1v1h-1zM805 677h1v1h-1zM805 686h1v1h-1zM805 695h1v1h-1zM805 704h1v1h-1zM805 713h1v1h-1zM805 722h1v1h-1zM805 731h1v1h-1zM805 740h1v1h-1zM805 749h1v1h-1zM805 758h1v1h-1zM805 767h1v1h-1zM805 776h1v1h-1zM805 785h1v1h-1zM805 795h1v1h-1zM805 804h1v1h-1zM805 813h1v1h-1zM805 822h1v1h-1zM805 831h1v1h-1zM805 840h1v1h-1zM805 849h1v1h-1zM805 858h1v1h-1zM805 867h1v1h-1zM805 876h1v1h-1zM805 885h1v1h-1zM805 894h1v1h-1zM805 903h1v1h-1zM805 912h1v1h-1zM805 921h1v1h-1zM805 930h1v1h-1zM805 939h1v1h-1zM805 948h1v1h-1zM805 957h1v1h-1zM805 966h1v1h-1zM805 975h1v1h-1zM805 984h1v1h-1zM805 993h1v1h-1zM805 1002h1v1h-1zM805 1011h1v1h-1zM805 1020h1v1h-1zM805 1029h1v1h-1zM805 1038h1v1h-1zM805 1047h1v1h-1zM805 1056h1v1h-1zM805 1065h1v1h-1zM805 1074h1v1h-1zM805 1083h1v1h-1zM805 1093h1v1h-1zM821 190h1v1h-1zM821 280h1v1h-1zM821 370h1v1h-1zM821 460h1v1h-1zM821 551h1v1h-1zM821 641h1v1h-1zM821 731h1v1h-1zM821 822h1v1h-1zM821 912h1v1h-1zM821 1002h1v1h-1zM821 1093h1v1h-1zM837 190h1v1h-1zM837 280h1v1h-1zM837 370h1v1h-1zM837 460h1v1h-1zM837 551h1v1h-1zM837 641h1v1h-1zM837 731h1v1h-1zM837 822h1v1h-1zM837 912h1v1h-1zM837 1002h1v1h-1zM837 1093h1v1h-1zM853 190h1v1h-1zM853 280h1v1h-1zM853 370h1v1h-1zM853 460h1v1h-1zM853 551h1v1h-1zM853 641h1v1h-1zM853 731h1v1h-1zM853 822h1v1h-1zM853 912h1v1h-1zM853 1002h1v1h-1zM853 1093h1v1h-1zM869 190h1v1h-1zM869 280h1v1h-1zM869 370h1v1h-1zM869 460h1v1h-1zM869 551h1v1h-1zM869 641h1v1h-1zM869 731h1v1h-1zM869 822h1v1h-1zM869 912h1v1h-1zM869 1002h1v1h-1zM869 1093h1v1h-1zM886 190h1v1h-1zM886 280h1v1h-1zM886 370h1v1h-1zM886 460h1v1h-1zM886 551h1v1h-1zM886 641h1v1h-1zM886 731h1v1h-1zM886 822h1v1h-1zM886 912h1v1h-1zM886 1002h1v1h-1zM886 1093h1v1h-1zM902 190h1v1h-1zM902 280h1v1h-1zM902 370h1v1h-1zM902 460h1v1h-1zM902 551h1v1h-1zM902 641h1v1h-1zM902 731h1v1h-1zM902 822h1v1h-1zM902 912h1v1h-1zM902 1002h1v1h-1zM902 1093h1v1h-1zM918 190h1v1h-1zM918 280h1v1h-1zM918 370h1v1h-1zM918 460h1v1h-1zM918 551h1v1h-1zM918 641h1v1h-1zM918 731h1v1h-1zM918 822h1v1h-1zM918 912h1v1h-1zM918 1002h1v1h-1zM918 1093h1v1h-1zM934 190h1v1h-1zM934 280h1v1h-1zM934 370h1v1h-1zM934 460h1v1h-1zM934 551h1v1h-1zM934 641h1v1h-1zM934 731h1v1h-1zM934 822h1v1h-1zM934 912h1v1h-1zM934 1002h1v1h-1zM934 1093h1v1h-1zM950 190h1v1h-1zM950 280h1v1h-1zM950 370h1v1h-1zM950 460h1v1h-1zM950 551h1v1h-1zM950 641h1v1h-1zM950 731h1v1h-1zM950 822h1v1h-1zM950 912h1v1h-1zM950 1002h1v1h-1zM950 1093h1v1h-1zM966 190h1v1h-1zM966 199h1v1h-1zM966 208h1v1h-1zM966 217h1v1h-1zM966 226h1v1h-1zM966 235h1v1h-1zM966 244h1v1h-1zM966 253h1v1h-1zM966 262h1v1h-1zM966 271h1v1h-1zM966 280h1v1h-1zM966 289h1v1h-1zM966 298h1v1h-1zM966 307h1v1h-1zM966 316h1v1h-1zM966 325h1v1h-1zM966 334h1v1h-1zM966 343h1v1h-1zM966 352h1v1h-1zM966 361h1v1h-1zM966 370h1v1h-1zM966 379h1v1h-1zM966 388h1v1h-1zM966 397h1v1h-1zM966 406h1v1h-1zM966 415h1v1h-1zM966 424h1v1h-1zM966 433h1v1h-1zM966 442h1v1h-1zM966 451h1v1h-1zM966 460h1v1h-1zM966 469h1v1h-1zM966 478h1v1h-1zM966 487h1v1h-1zM966 497h1v1h-1zM966 506h1v1h-1zM966 515h1v1h-1zM966 524h1v1h-1zM966 533h1v1h-1zM966 542h1v1h-1zM966 551h1v1h-1zM966 560h1v1h-1zM966 569h1v1h-1zM966 578h1v1h-1zM966 587h1v1h-1zM966 596h1v1h-1zM966 605h1v1h-1zM966 614h1v1h-1zM966 623h1v1h-1zM966 632h1v1h-1zM966 641h1v1h-1zM966 650h1v1h-1zM966 659h1v1h-1zM966 668h1v1h-1zM966 677h1v1h-1zM966 686h1v1h-1zM966 695h1v1h-1zM966 704h1v1h-1zM966 713h1v1h-1zM966 722h1v1h-1zM966 731h1v1h-1zM966 740h1v1h-1zM966 749h1v1h-1zM966 758h1v1h-1zM966 767h1v1h-1zM966 776h1v1h-1zM966 785h1v1h-1zM966 795h1v1h-1zM966 804h1v1h-1zM966 813h1v1h-1zM966 822h1v1h-1zM966 831h1v1h-1zM966 840h1v1h-1zM966 849h1v1h-1zM966 858h1v1h-1zM966 867h1v1h-1zM966 876h1v1h-1zM966 885h1v1h-1zM966 894h1v1h-1zM966 903h1v1h-1zM966 912h1v1h-1zM966 921h1v1h-1zM966 930h1v1h-1zM966 939h1v1h-1zM966 948h1v1h-1zM966 957h1v1h-1zM966 966h1v1h-1zM966 975h1v1h-1zM966 984h1v1h-1zM966 993h1v1h-1zM966 1002h1v1h-1zM966 1011h1v1h-1zM966 1020h1v1h-1zM966 1029h1v1h-1zM966 1038h1v1h-1zM966 1047h1v1h-1zM966 1056h1v1h-1zM966 1065h1v1h-1zM966 1074h1v1h-1zM966 1083h1v1h-1zM966 1093h1v1h-1zM982 190h1v1h-1zM982 280h1v1h-1zM982 370h1v1h-1zM982 460h1v1h-1zM982 551h1v1h-1zM982 641h1v1h-1zM982 731h1v1h-1zM982 822h1v1h-1zM982 912h1v1h-1zM982 1002h1v1h-1zM982 1093h1v1h-1zM998 190h1v1h-1zM998 280h1v1h-1zM998 370h1v1h-1zM998 460h1v1h-1zM998 551h1v1h-1zM998 641h1v1h-1zM998 731h1v1h-1zM998 822h1v1h-1zM998 912h1v1h-1zM998 1002h1v1h-1zM998 1093h1v1h-1zM1014 190h1v1h-1zM1014 280h1v1h-1zM1014 370h1v1h-1zM1014 460h1v1h-1zM1014 551h1v1h-1zM1014 641h1v1h-1zM1014 731h1v1h-1zM1014 822h1v1h-1zM1014 912h1v1h-1zM1014 1002h1v1h-1zM1014 1093h1v1h-1zM1031 190h1v1h-1zM1031 280h1v1h-1zM1031 370h1v1h-1zM1031 460h1v1h-1zM1031 551h1v1h-1zM1031 641h1v1h-1zM1031 731h1v1h-1zM1031 822h1v1h-1zM1031 912h1v1h-1zM1031 1002h1v1h-1zM1031 1093h1v1h-1zM1047 190h1v1h-1zM1047 280h1v1h-1zM1047 370h1v1h-1zM1047 460h1v1h-1zM1047 551h1v1h-1zM1047 641h1v1h-1zM1047 731h1v1h-1zM1047 822h1v1h-1zM1047 912h1v1h-1zM1047 1002h1v1h-1zM1047 1093h1v1h-1zM1063 190h1v1h-1zM1063 280h1v1h-1zM1063 370h1v1h-1zM1063 460h1v1h-1zM1063 551h1v1h-1zM1063 641h1v1h-1zM1063 731h1v1h-1zM1063 822h1v1h-1zM1063 912h1v1h-1zM1063 1002h1v1h-1zM1063 1093h1v1h-1zM1079 190h1v1h-1zM1079 280h1v1h-1zM1079 370h1v1h-1zM1079 460h1v1h-1zM1079 551h1v1h-1zM1079 641h1v1h-1zM1079 731h1v1h-1zM1079 822h1v1h-1zM1079 912h1v1h-1zM1079 1002h1v1h-1zM1079 1093h1v1h-1zM1095 190h1v1h-1zM1095 280h1v1h-1zM1095 370h1v1h-1zM1095 460h1v1h-1zM1095 551h1v1h-1zM1095 641h1v1h-1zM1095 731h1v1h-1zM1095 822h1v1h-1zM1095 912h1v1h-1zM1095 1002h1v1h-1zM1095 1093h1v1h-1zM1111 190h1v1h-1zM1111 280h1v1h-1zM1111 370h1v1h-1zM1111 460h1v1h-1zM1111 551h1v1h-1zM1111 641h1v1h-1zM1111 731h1v1h-1zM1111 822h1v1h-1zM1111 912h1v1h-1zM1111 1002h1v1h-1zM1111 1093h1v1h-1zM1127 190h1v1h-1zM1127 199h1v1h-1zM1127 208h1v1h-1zM1127 217h1v1h-1zM1127 226h1v1h-1zM1127 235h1v1h-1zM1127 244h1v1h-1zM1127 253h1v1h-1zM1127 262h1v1h-1zM1127 271h1v1h-1zM1127 280h1v1h-1zM1127 289h1v1h-1zM1127 298h1v1h-1zM1127 307h1v1h-1zM1127 316h1v1h-1zM1127 325h1v1h-1zM1127 334h1v1h-1zM1127 343h1v1h-1zM1127 352h1v1h-1zM1127 361h1v1h-1zM1127 370h1v1h-1zM1127 379h1v1h-1zM1127 388h1v1h-1zM1127 397h1v1h-1zM1127 406h1v1h-1zM1127 415h1v1h-1zM1127 424h1v1h-1zM1127 433h1v1h-1zM1127 442h1v1h-1zM1127 451h1v1h-1zM1127 460h1v1h-1zM1127 469h1v1h-1zM1127 478h1v1h-1zM1127 487h1v1h-1zM1127 497h1v1h-1zM1127 506h1v1h-1zM1127 515h1v1h-1zM1127 524h1v1h-1zM1127 533h1v1h-1zM1127 542h1v1h-1zM1127 551h1v1h-1zM1127 560h1v1h-1zM1127 569h1v1h-1zM1127 578h1v1h-1zM1127 587h1v1h-1zM1127 596h1v1h-1zM1127 605h1v1h-1zM1127 614h1v1h-1zM1127 623h1v1h-1zM1127 632h1v1h-1zM1127 641h1v1h-1zM1127 650h1v1h-1zM1127 659h1v1h-1zM1127 668h1v1h-1zM1127 677h1v1h-1zM1127 686h1v1h-1zM1127 695h1v1h-1zM1127 704h1v1h-1zM1127 713h1v1h-1zM1127 722h1v1h-1zM1127 731h1v1h-1zM1127 740h1v1h-1zM1127 749h1v1h-1zM1127 758h1v1h-1zM1127 767h1v1h-1zM1127 776h1v1h-1zM1127 785h1v1h-1zM1127 795h1v1h-1zM1127 804h1v1h-1zM1127 813h1v1h-1zM1127 822h1v1h-1zM1127 831h1v1h-1zM1127 840h1v1h-1zM1127 849h1v1h-1zM1127 858h1v1h-1zM1127 867h1v1h-1zM1127 876h1v1h-1zM1127 885h1v1h-1zM1127 894h1v1h-1zM1127 903h1v1h-1zM1127 912h1v1h-1zM1127 921h1v1h-1zM1127 930h1v1h-1zM1127 939h1v1h-1zM1127 948h1v1h-1zM1127 957h1v1h-1zM1127 966h1v1h-1zM1127 975h1v1h-1zM1127 984h1v1h-1zM1127 993h1v1h-1zM1127 1002h1v1h-1zM1127 1011h1v1h-1zM1127 1020h1v1h-1zM1127 1029h1v1h-1zM1127 1038h1v1h-1zM1127 1047h1v1h-1zM1127 1056h1v1h-1zM1127 1065h1v1h-1zM1127 1074h1v1h-1zM1127 1083h1v1h-1zM1127 1093h1v1h-1zM1143 190h1v1h-1zM1143 280h1v1h-1zM1143 370h1v1h-1zM1143 460h1v1h-1zM1143 551h1v1h-1zM1143 641h1v1h-1zM1143 731h1v1h-1zM1143 822h1v1h-1zM1143 912h1v1h-1zM1143 1002h1v1h-1zM1143 1093h1v1h-1zM1159 190h1v1h-1zM1159 280h1v1h-1zM1159 370h1v1h-1zM1159 460h1v1h-1zM1159 551h1v1h-1zM1159 641h1v1h-1zM1159 731h1v1h-1zM1159 822h1v1h-1zM1159 912h1v1h-1zM1159 1002h1v1h-1zM1159 1093h1v1h-1zM1176 190h1v1h-1zM1176 280h1v1h-1zM1176 370h1v1h-1zM1176 460h1v1h-1zM1176 551h1v1h-1zM1176 641h1v1h-1zM1176 731h1v1h-1zM1176 822h1v1h-1zM1176 912h1v1h-1zM1176 1002h1v1h-1zM1176 1093h1v1h-1zM1192 190h1v1h-1zM1192 280h1v1h-1zM1192 370h1v1h-1zM1192 460h1v1h-1zM1192 551h1v1h-1zM1192 641h1v1h-1zM1192 731h1v1h-1zM1192 822h1v1h-1zM1192 912h1v1h-1zM1192 1002h1v1h-1zM1192 1093h1v1h-1zM1208 190h1v1h-1zM1208 280h1v1h-1zM1208 370h1v1h-1zM1208 460h1v1h-1zM1208 551h1v1h-1zM1208 641h1v1h-1zM1208 731h1v1h-1zM1208 822h1v1h-1zM1208 912h1v1h-1zM1208 1002h1v1h-1zM1208 1093h1v1h-1zM1224 190h1v1h-1zM1224 280h1v1h-1zM1224 370h1v1h-1zM1224 460h1v1h-1zM1224 551h1v1h-1zM1224 641h1v1h-1zM1224 731h1v1h-1zM1224 822h1v1h-1zM1224 912h1v1h-1zM1224 1002h1v1h-1zM1224 1093h1v1h-1zM1240 190h1v1h-1zM1240 280h1v1h-1zM1240 370h1v1h-1zM1240 460h1v1h-1zM1240 551h1v1h-1zM1240 641h1v1h-1zM1240 731h1v1h-1zM1240 822h1v1h-1zM1240 912h1v1h-1zM1240 1002h1v1h-1zM1240 1093h1v1h-1zM1256 190h1v1h-1zM1256 280h1v1h-1zM1256 370h1v1h-1zM1256 460h1v1h-1zM1256 551h1v1h-1zM1256 641h1v1h-1zM1256 731h1v1h-1zM1256 822h1v1h-1zM1256 912h1v1h-1zM1256 1002h1v1h-1zM1256 1093h1v1h-1zM1272 190h1v1h-1zM1272 280h1v1h-1zM1272 370h1v1h-1zM1272 460h1v1h-1zM1272 551h1v1h-1zM1272 641h1v1h-1zM1272 731h1v1h-1zM1272 822h1v1h-1zM1272 912h1v1h-1zM1272 1002h1v1h-1zM1272 1093h1v1h-1zM1288 190h1v1h-1zM1288 199h1v1h-1zM1288 208h1v1h-1zM1288 217h1v1h-1zM1288 226h1v1h-1zM1288 235h1v1h-1zM1288 244h1v1h-1zM1288 253h1v1h-1zM1288 262h1v1h-1zM1288 271h1v1h-1zM1288 280h1v1h-1zM1288 289h1v1h-1zM1288 298h1v1h-1zM1288 307h1v1h-1zM1288 316h1v1h-1zM1288 325h1v1h-1zM1288 334h1v1h-1zM1288 343h1v1h-1zM1288 352h1v1h-1zM1288 361h1v1h-1zM1288 370h1v1h-1zM1288 379h1v1h-1zM1288 388h1v1h-1zM1288 397h1v1h-1zM1288 406h1v1h-1zM1288 415h1v1h-1zM1288 424h1v1h-1zM1288 433h1v1h-1zM1288 442h1v1h-1zM1288 451h1v1h-1zM1288 460h1v1h-1zM1288 469h1v1h-1zM1288 478h1v1h-1zM1288 487h1v1h-1zM1288 497h1v1h-1zM1288 506h1v1h-1zM1288 515h1v1h-1zM1288 524h1v1h-1zM1288 533h1v1h-1zM1288 542h1v1h-1zM1288 551h1v1h-1zM1288 560h1v1h-1zM1288 569h1v1h-1zM1288 578h1v1h-1zM1288 587h1v1h-1zM1288 596h1v1h-1zM1288 605h1v1h-1zM1288 614h1v1h-1zM1288 623h1v1h-1zM1288 632h1v1h-1zM1288 641h1v1h-1zM1288 650h1v1h-1zM1288 659h1v1h-1zM1288 668h1v1h-1zM1288 677h1v1h-1zM1288 686h1v1h-1zM1288 695h1v1h-1zM1288 704h1v1h-1zM1288 713h1v1h-1zM1288 722h1v1h-1zM1288 731h1v1h-1zM1288 740h1v1h-1zM1288 749h1v1h-1zM1288 758h1v1h-1zM1288 767h1v1h-1zM1288 776h1v1h-1zM1288 785h1v1h-1zM1288 795h1v1h-1zM1288 804h1v1h-1zM1288 813h1v1h-1zM1288 822h1v1h-1zM1288 831h1v1h-1zM1288 840h1v1h-1zM1288 849h1v1h-1zM1288 858h1v1h-1zM1288 867h1v1h-1zM1288 876h1v1h-1zM1288 885h1v1h-1zM1288 894h1v1h-1zM1288 903h1v1h-1zM1288 912h1v1h-1zM1288 921h1v1h-1zM1288 930h1v1h-1zM1288 939h1v1h-1zM1288 948h1v1h-1zM1288 957h1v1h-1zM1288 966h1v1h-1zM1288 975h1v1h-1zM1288 984h1v1h-1zM1288 993h1v1h-1zM1288 1002h1v1h-1zM1288 1011h1v1h-1zM1288 1020h1v1h-1zM1288 1029h1v1h-1zM1288 1038h1v1h-1zM1288 1047h1v1h-1zM1288 1056h1v1h-1zM1288 1065h1v1h-1zM1288 1074h1v1h-1zM1288 1083h1v1h-1zM1288 1093h1v1h-1zM1304 190h1v1h-1zM1304 280h1v1h-1zM1304 370h1v1h-1zM1304 460h1v1h-1zM1304 551h1v1h-1zM1304 641h1v1h-1zM1304 731h1v1h-1zM1304 822h1v1h-1zM1304 912h1v1h-1zM1304 1002h1v1h-1zM1304 1093h1v1h-1zM1321 190h1v1h-1zM1321 280h1v1h-1zM1321 370h1v1h-1zM1321 460h1v1h-1zM1321 551h1v1h-1zM1321 641h1v1h-1zM1321 731h1v1h-1zM1321 822h1v1h-1zM1321 912h1v1h-1zM1321 1002h1v1h-1zM1321 1093h1v1h-1zM1337 190h1v1h-1zM1337 280h1v1h-1zM1337 370h1v1h-1zM1337 460h1v1h-1zM1337 551h1v1h-1zM1337 641h1v1h-1zM1337 731h1v1h-1zM1337 822h1v1h-1zM1337 912h1v1h-1zM1337 1002h1v1h-1zM1337 1093h1v1h-1zM1353 190h1v1h-1zM1353 280h1v1h-1zM1353 370h1v1h-1zM1353 460h1v1h-1zM1353 551h1v1h-1zM1353 641h1v1h-1zM1353 731h1v1h-1zM1353 822h1v1h-1zM1353 912h1v1h-1zM1353 1002h1v1h-1zM1353 1093h1v1h-1zM1369 190h1v1h-1zM1369 280h1v1h-1zM1369 370h1v1h-1zM1369 460h1v1h-1zM1369 551h1v1h-1zM1369 641h1v1h-1zM1369 731h1v1h-1zM1369 822h1v1h-1zM1369 912h1v1h-1zM1369 1002h1v1h-1zM1369 1093h1v1h-1zM1385 190h1v1h-1zM1385 280h1v1h-1zM1385 370h1v1h-1zM1385 460h1v1h-1zM1385 551h1v1h-1zM1385 641h1v1h-1zM1385 731h1v1h-1zM1385 822h1v1h-1zM1385 912h1v1h-1zM1385 1002h1v1h-1zM1385 1093h1v1h-1zM1401 190h1v1h-1zM1401 280h1v1h-1zM1401 370h1v1h-1zM1401 460h1v1h-1zM1401 551h1v1h-1zM1401 641h1v1h-1zM1401 731h1v1h-1zM1401 822h1v1h-1zM1401 912h1v1h-1zM1401 1002h1v1h-1zM1401 1093h1v1h-1zM1417 190h1v1h-1zM1417 280h1v1h-1zM1417 370h1v1h-1zM1417 460h1v1h-1zM1417 551h1v1h-1zM1417 641h1v1h-1zM1417 731h1v1h-1zM1417 822h1v1h-1zM1417 912h1v1h-1zM1417 1002h1v1h-1zM1417 1093h1v1h-1zM1433 190h1v1h-1zM1433 280h1v1h-1zM1433 370h1v1h-1zM1433 460h1v1h-1zM1433 551h1v1h-1zM1433 641h1v1h-1zM1433 731h1v1h-1zM1433 822h1v1h-1zM1433 912h1v1h-1zM1433 1002h1v1h-1zM1433 1093h1v1h-1zM1449 190h1v1h-1zM1449 199h1v1h-1zM1449 208h1v1h-1zM1449 217h1v1h-1zM1449 226h1v1h-1zM1449 235h1v1h-1zM1449 244h1v1h-1zM1449 253h1v1h-1zM1449 262h1v1h-1zM1449 271h1v1h-1zM1449 280h1v1h-1zM1449 289h1v1h-1zM1449 298h1v1h-1zM1449 307h1v1h-1zM1449 316h1v1h-1zM1449 325h1v1h-1zM1449 334h1v1h-1zM1449 343h1v1h-1zM1449 352h1v1h-1zM1449 361h1v1h-1zM1449 370h1v1h-1zM1449 379h1v1h-1zM1449 388h1v1h-1zM1449 397h1v1h-1zM1449 406h1v1h-1zM1449 415h1v1h-1zM1449 424h1v1h-1zM1449 433h1v1h-1zM1449 442h1v1h-1zM1449 451h1v1h-1zM1449 460h1v1h-1zM1449 469h1v1h-1zM1449 478h1v1h-1zM1449 487h1v1h-1zM1449 497h1v1h-1zM1449 506h1v1h-1zM1449 515h1v1h-1zM1449 524h1v1h-1zM1449 533h1v1h-1zM1449 542h1v1h-1zM1449 551h1v1h-1zM1449 560h1v1h-1zM1449 569h1v1h-1zM1449 578h1v1h-1zM1449 587h1v1h-1zM1449 596h1v1h-1zM1449 605h1v1h-1zM1449 614h1v1h-1zM1449 623h1v1h-1zM1449 632h1v1h-1zM1449 641h1v1h-1zM1449 650h1v1h-1zM1449 659h1v1h-1zM1449 668h1v1h-1zM1449 677h1v1h-1zM1449 686h1v1h-1zM1449 695h1v1h-1zM1449 704h1v1h-1zM1449 713h1v1h-1zM1449 722h1v1h-1zM1449 731h1v1h-1zM1449 740h1v1h-1zM1449 749h1v1h-1zM1449 758h1v1h-1zM1449 767h1v1h-1zM1449 776h1v1h-1zM1449 785h1v1h-1zM1449 795h1v1h-1zM1449 804h1v1h-1zM1449 813h1v1h-1zM1449 822h1v1h-1zM1449 831h1v1h-1zM1449 840h1v1h-1zM1449 849h1v1h-1zM1449 858h1v1h-1zM1449 867h1v1h-1zM1449 876h1v1h-1zM1449 885h1v1h-1zM1449 894h1v1h-1zM1449 903h1v1h-1zM1449 912h1v1h-1zM1449 921h1v1h-1zM1449 930h1v1h-1zM1449 939h1v1h-1zM1449 948h1v1h-1zM1449 957h1v1h-1zM1449 966h1v1h-1zM1449 975h1v1h-1zM1449 984h1v1h-1zM1449 993h1v1h-1zM1449 1002h1v1h-1zM1449 1011h1v1h-1zM1449 1020h1v1h-1zM1449 1029h1v1h-1zM1449 1038h1v1h-1zM1449 1047h1v1h-1zM1449 1056h1v1h-1zM1449 1065h1v1h-1zM1449 1074h1v1h-1zM1449 1083h1v1h-1zM1449 1093h1v1h-1zM1466 190h1v1h-1zM1466 280h1v1h-1zM1466 370h1v1h-1zM1466 460h1v1h-1zM1466 551h1v1h-1zM1466 641h1v1h-1zM1466 731h1v1h-1zM1466 822h1v1h-1zM1466 912h1v1h-1zM1466 1002h1v1h-1zM1466 1093h1v1h-1zM1482 190h1v1h-1zM1482 280h1v1h-1zM1482 370h1v1h-1zM1482 460h1v1h-1zM1482 551h1v1h-1zM1482 641h1v1h-1zM1482 731h1v1h-1zM1482 822h1v1h-1zM1482 912h1v1h-1zM1482 1002h1v1h-1zM1482 1093h1v1h-1zM1498 190h1v1h-1zM1498 280h1v1h-1zM1498 370h1v1h-1zM1498 460h1v1h-1zM1498 551h1v1h-1zM1498 641h1v1h-1zM1498 731h1v1h-1zM1498 822h1v1h-1zM1498 912h1v1h-1zM1498 1002h1v1h-1zM1498 1093h1v1h-1zM1514 190h1v1h-1zM1514 280h1v1h-1zM1514 370h1v1h-1zM1514 460h1v1h-1zM1514 551h1v1h-1zM1514 641h1v1h-1zM1514 731h1v1h-1zM1514 822h1v1h-1zM1514 912h1v1h-1zM1514 1002h1v1h-1zM1514 1093h1v1h-1zM1530 190h1v1h-1zM1530 280h1v1h-1zM1530 370h1v1h-1zM1530 460h1v1h-1zM1530 551h1v1h-1zM1530 641h1v1h-1zM1530 731h1v1h-1zM1530 822h1v1h-1zM1530 912h1v1h-1zM1530 1002h1v1h-1zM1530 1093h1v1h-1zM1546 190h1v1h-1zM1546 280h1v1h-1zM1546 370h1v1h-1zM1546 460h1v1h-1zM1546 551h1v1h-1zM1546 641h1v1h-1zM1546 731h1v1h-1zM1546 822h1v1h-1zM1546 912h1v1h-1zM1546 1002h1v1h-1zM1546 1093h1v1h-1zM1562 190h1v1h-1zM1562 280h1v1h-1zM1562 370h1v1h-1zM1562 460h1v1h-1zM1562 551h1v1h-1zM1562 641h1v1h-1zM1562 731h1v1h-1zM1562 822h1v1h-1zM1562 912h1v1h-1zM1562 1002h1v1h-1zM1562 1093h1v1h-1zM1578 190h1v1h-1zM1578 280h1v1h-1zM1578 370h1v1h-1zM1578 460h1v1h-1zM1578 551h1v1h-1zM1578 641h1v1h-1zM1578 731h1v1h-1zM1578 822h1v1h-1zM1578 912h1v1h-1zM1578 1002h1v1h-1zM1578 1093h1v1h-1zM1594 190h1v1h-1zM1594 280h1v1h-1zM1594 370h1v1h-1zM1594 460h1v1h-1zM1594 551h1v1h-1zM1594 641h1v1h-1zM1594 731h1v1h-1zM1594 822h1v1h-1zM1594 912h1v1h-1zM1594 1002h1v1h-1zM1594 1093h1v1h-1zM1611 190h1v1h-1zM1611 199h1v1h-1zM1611 208h1v1h-1zM1611 217h1v1h-1zM1611 226h1v1h-1zM1611 235h1v1h-1zM1611 244h1v1h-1zM1611 253h1v1h-1zM1611 262h1v1h-1zM1611 271h1v1h-1zM1611 280h1v1h-1zM1611 289h1v1h-1zM1611 298h1v1h-1zM1611 307h1v1h-1zM1611 316h1v1h-1zM1611 325h1v1h-1zM1611 334h1v1h-1zM1611 343h1v1h-1zM1611 352h1v1h-1zM1611 361h1v1h-1zM1611 370h1v1h-1zM1611 379h1v1h-1zM1611 388h1v1h-1zM1611 397h1v1h-1zM1611 406h1v1h-1zM1611 415h1v1h-1zM1611 424h1v1h-1zM1611 433h1v1h-1zM1611 442h1v1h-1zM1611 451h1v1h-1zM1611 460h1v1h-1zM1611 469h1v1h-1zM1611 478h1v1h-1zM1611 487h1v1h-1zM1611 497h1v1h-1zM1611 506h1v1h-1zM1611 515h1v1h-1zM1611 524h1v1h-1zM1611 533h1v1h-1zM1611 542h1v1h-1zM1611 551h1v1h-1zM1611 560h1v1h-1zM1611 569h1v1h-1zM1611 578h1v1h-1zM1611 587h1v1h-1zM1611 596h1v1h-1zM1611 605h1v1h-1zM1611 614h1v1h-1zM1611 623h1v1h-1zM1611 632h1v1h-1zM1611 641h1v1h-1zM1611 650h1v1h-1zM1611 659h1v1h-1zM1611 668h1v1h-1zM1611 677h1v1h-1zM1611 686h1v1h-1zM1611 695h1v1h-1zM1611 704h1v1h-1zM1611 713h1v1h-1zM1611 722h1v1h-1zM1611 731h1v1h-1zM1611 740h1v1h-1zM1611 749h1v1h-1zM1611 758h1v1h-1zM1611 767h1v1h-1zM1611 776h1v1h-1zM1611 785h1v1h-1zM1611 795h1v1h-1zM1611 804h1v1h-1zM1611 813h1v1h-1zM1611 822h1v1h-1zM1611 831h1v1h-1zM1611 840h1v1h-1zM1611 849h1v1h-1zM1611 858h1v1h-1zM1611 867h1v1h-1zM1611 876h1v1h-1zM1611 885h1v1h-1zM1611 894h1v1h-1zM1611 903h1v1h-1zM1611 912h1v1h-1zM1611 921h1v1h-1zM1611 930h1v1h-1zM1611 939h1v1h-1zM1611 948h1v1h-1zM1611 957h1v1h-1zM1611 966h1v1h-1zM1611 975h1v1h-1zM1611 984h1v1h-1zM1611 993h1v1h-1zM1611 1002h1v1h-1zM1611 1011h1v1h-1zM1611 1020h1v1h-1zM1611 1029h1v1h-1zM1611 1038h1v1h-1zM1611 1047h1v1h-1zM1611 1056h1v1h-1zM1611 1065h1v1h-1zM1611 1074h1v1h-1zM1611 1083h1v1h-1zM1611 1093h1v1h-1z" fill="#ffffff"/>
<line x1="0" y1="732.5" x2="1612" y2="732.5" stroke="#9a9a9a" stroke-width="1" />
<line x1="0" y1="823.5" x2="1612" y2="823.5" stroke="#9a9a9a" stroke-width="1" />
<line x1="0" y1="1003.5" x2="1612" y2="1003.5" stroke="#9a9a9a" stroke-width="1" />
<path d="M36.5 288 V240 M18.5 264 L36.5 240.5 L56 264" stroke="#8a8a8a" fill="none"/>
<polyline points="0.0,198.5 811.0,198.5 827.0,288.5 1612.0,288.5" fill="none" stroke="#66d400" stroke-width="1" shape-rendering="crispEdges" />
<line x1="0" y1="288.5" x2="827" y2="288.5" stroke="#66d400" stroke-width="1" />
<line x1="0" y1="288.5" x2="827" y2="288.5" stroke="#9a9a9a" stroke-width="1" stroke-dasharray="4 2" stroke-dashoffset="4"/>
<polyline points="0.0,756.5 110.0,756.5 110.0,755.5 400.0,755.5 400.0,754.5 811.0,754.5 811.0,754.5 826.8,732.5 875.7,732.5 891.5,775.5 907.3,775.5 923.1,993.5 940.0,993.5 955.8,965.5 972.0,965.5 987.8,931.5 1004.4,931.5 1020.2,917.5 1036.5,917.5 1052.3,894.5 1069.5,894.5 1085.3,876.5 1101.0,876.5 1116.8,861.5 1133.5,861.5 1149.3,847.5 1166.0,847.5 1181.8,835.5 1198.5,835.5 1214.3,825.5 1230.6,825.5 1246.4,816.5 1263.0,816.5 1278.8,808.5 1295.0,808.5 1310.8,801.5 1327.5,801.5 1343.3,796.5 1360.5,796.5 1376.3,790.5 1392.0,790.5 1407.8,785.5 1424.5,785.5 1440.3,780.5 1457.7,780.5 1473.5,776.5 1490.6,776.5 1506.4,772.5 1522.5,772.5 1538.3,769.5 1554.7,769.5 1570.5,766.5 1586.0,766.5 1601.8,763.5 1612.0,763.5" fill="none" stroke="#d69f00" stroke-width="1" shape-rendering="crispEdges" />
<polyline points="0.0,847.5 110.0,847.5 110.0,846.5 400.0,846.5 400.0,845.5 811.0,845.5 811.0,845.5 826.8,823.5 875.7,823.5 891.5,866.5 907.3,866.5 923.1,1084.5 940.0,1084.5 955.8,1056.5 972.0,1056.5 987.8,1022.5 1004.4,1022.5 1020.2,1008.5 1036.5,1008.5 1052.3,985.5 1069.5,985.5 1085.3,967.5 1101.0,967.5 1116.8,952.5 1133.5,952.5 1149.3,938.5 1166.0,938.5 1181.8,926.5 1198.5,926.5 1214.3,916.5 1230.6,916.5 1246.4,907.5 1263.0,907.5 1278.8,899.5 1295.0,899.5 1310.8,892.5 1327.5,892.5 1343.3,887.5 1360.5,887.5 1376.3,881.5 1392.0,881.5 1407.8,876.5 1424.5,876.5 1440.3,871.5 1457.7,871.5 1473.5,867.5 1490.6,867.5 1506.4,863.5 1522.5,863.5 1538.3,860.5 1554.7,860.5 1570.5,857.5 1586.0,857.5 1601.8,854.5 1612.0,854.5" fill="none" stroke="#6a00d6" stroke-width="1" shape-rendering="crispEdges" />
<polyline points="238.0,930.5 843.3,930.5 859.3,1003.5 1612.0,1003.5" fill="none" stroke="#d40000" stroke-width="1" shape-rendering="crispEdges" />
<polyline points="0.0,929.5 811.0,929.5 826.7,1003.5 916.0,1003.5 916.0,1002.5 1012.0,1002.5 1012.0,1003.5 1612.0,1003.5" fill="none" stroke="#00d4d4" stroke-width="1" shape-rendering="crispEdges" />
<text x="5.00" y="210.70" font-size="16" fill="#66d400" stroke="#66d400" stroke-width="0.12" textLength="141.06" lengthAdjust="spacingAndGlyphs" style="white-space:pre" >pid.x.index-enable</text>
<text x="5.50" y="228.75" font-size="16" fill="#66d400" stroke="#66d400" stroke-width="0.12" textLength="42.05" lengthAdjust="spacingAndGlyphs" style="white-space:pre" >1 /div</text>
<text x="4.80" y="766.40" font-size="16" fill="#d69f00" stroke="#d69f00" stroke-width="0.12" textLength="79.73" lengthAdjust="spacingAndGlyphs" style="white-space:pre" >pid.x.error</text>
<text x="4.80" y="784.80" font-size="16" fill="#d69f00" stroke="#d69f00" stroke-width="0.12" textLength="73.02" lengthAdjust="spacingAndGlyphs" style="white-space:pre" >200m/div</text>
<text x="4.80" y="857.30" font-size="16" fill="#6a00d6" stroke="#6a00d6" stroke-width="0.12" textLength="94.43" lengthAdjust="spacingAndGlyphs" style="white-space:pre" >pid.x.output</text>
<text x="4.80" y="875.40" font-size="16" fill="#6a00d6" stroke="#6a00d6" stroke-width="0.12" textLength="73.02" lengthAdjust="spacingAndGlyphs" style="white-space:pre" >200m/div</text>
<text x="4.80" y="941.10" font-size="16" fill="#d40000" stroke="#d40000" stroke-width="0.12" textLength="118.49" lengthAdjust="spacingAndGlyphs" style="white-space:pre" >pid.x.command</text>
<text x="4.80" y="959.20" font-size="16" fill="#d40000" stroke="#d40000" stroke-width="0.12" textLength="53.25" lengthAdjust="spacingAndGlyphs" style="white-space:pre" >50 /div</text>
<text x="4.80" y="975.70" font-size="16" fill="#00d4d4" stroke="#00d4d4" stroke-width="0.12" textLength="112.07" lengthAdjust="spacingAndGlyphs" style="white-space:pre" >pid.x.feedback</text>
<text x="4.80" y="993.10" font-size="16" fill="#00d4d4" stroke="#00d4d4" stroke-width="0.12" textLength="53.25" lengthAdjust="spacingAndGlyphs" style="white-space:pre" >50 /div</text>
<text x="165.50" y="451.60" font-size="18" fill="#ff0000" stroke="#ff0000" stroke-width="0.12" textLength="106.21" lengthAdjust="spacingAndGlyphs" style="white-space:pre" >Patched PID</text>
<text x="98.40" y="503.00" font-size="18" fill="#ff0000" stroke="#ff0000" stroke-width="0.12" textLength="273.36" lengthAdjust="spacingAndGlyphs" style="white-space:pre" >pid.x.error-previous-terget = 1</text>
<text x="518.40" y="442.00" font-size="18" fill="#ff0000" stroke="#ff0000" stroke-width="0.12" textLength="68.31" lengthAdjust="spacingAndGlyphs" style="white-space:pre" >Cycle N</text>
<text x="510.30" y="533.80" font-size="18" fill="#ff0000" stroke="#ff0000" stroke-width="0.12" textLength="94.14" lengthAdjust="spacingAndGlyphs" style="white-space:pre" >Cycle N+1</text>
<rect x="1.5" y="1095.5" width="97.0" height="27.0" rx="3.5" fill="url(#gc1)" stroke="#7a1010"/>
<text x="45.61" y="1115.00" font-size="17" fill="#000" stroke="#000" stroke-width="0.12" textLength="8.75" lengthAdjust="spacingAndGlyphs" style="white-space:pre" >1</text>
<rect x="101.5" y="1095.5" width="97.0" height="27.0" rx="3.5" fill="url(#gc2)" stroke="#0e7a7a"/>
<text x="145.60" y="1115.00" font-size="17" fill="#000" stroke="#000" stroke-width="0.12" textLength="8.75" lengthAdjust="spacingAndGlyphs" style="white-space:pre" >2</text>
<rect x="201.5" y="1095.5" width="97.0" height="27.0" rx="3.5" fill="url(#gc3)" stroke="#3e7a10"/>
<text x="245.60" y="1115.00" font-size="17" fill="#000" stroke="#000" stroke-width="0.12" textLength="8.75" lengthAdjust="spacingAndGlyphs" style="white-space:pre" >3</text>
<rect x="301.5" y="1095.5" width="97.0" height="27.0" rx="3.5" fill="url(#gc4)" stroke="#40107a"/>
<text x="345.61" y="1115.00" font-size="17" fill="#000" stroke="#000" stroke-width="0.12" textLength="8.75" lengthAdjust="spacingAndGlyphs" style="white-space:pre" >4</text>
<rect x="401.5" y="1095.5" width="97.0" height="27.0" rx="3.5" fill="url(#gc5)" stroke="#7a5e10"/>
<text x="445.61" y="1115.00" font-size="17" fill="#000" stroke="#000" stroke-width="0.12" textLength="8.75" lengthAdjust="spacingAndGlyphs" style="white-space:pre" >5</text>
<rect x="501.5" y="1095.5" width="97.0" height="27.0" rx="3.5" fill="url(#gbtn)" stroke="#a19e99"/>
<text x="545.61" y="1115.00" font-size="17" fill="#000" stroke="#000" stroke-width="0.12" textLength="8.75" lengthAdjust="spacingAndGlyphs" style="white-space:pre" >6</text>
<rect x="601.5" y="1095.5" width="97.0" height="27.0" rx="3.5" fill="url(#gbtn)" stroke="#a19e99"/>
<text x="645.61" y="1115.00" font-size="17" fill="#000" stroke="#000" stroke-width="0.12" textLength="8.75" lengthAdjust="spacingAndGlyphs" style="white-space:pre" >7</text>
<rect x="701.5" y="1095.5" width="97.0" height="27.0" rx="3.5" fill="url(#gbtn)" stroke="#a19e99"/>
<text x="745.61" y="1115.00" font-size="17" fill="#000" stroke="#000" stroke-width="0.12" textLength="8.75" lengthAdjust="spacingAndGlyphs" style="white-space:pre" >8</text>
<rect x="801.5" y="1095.5" width="97.0" height="27.0" rx="3.5" fill="url(#gbtn)" stroke="#a19e99"/>
<text x="845.61" y="1115.00" font-size="17" fill="#000" stroke="#000" stroke-width="0.12" textLength="8.75" lengthAdjust="spacingAndGlyphs" style="white-space:pre" >9</text>
<rect x="901.5" y="1095.5" width="97.0" height="27.0" rx="3.5" fill="url(#gbtn)" stroke="#a19e99"/>
<text x="940.52" y="1115.00" font-size="17" fill="#000" stroke="#000" stroke-width="0.12" textLength="18.96" lengthAdjust="spacingAndGlyphs" style="white-space:pre" >10</text>
<rect x="1001.5" y="1095.5" width="97.0" height="27.0" rx="3.5" fill="url(#gbtn)" stroke="#a19e99"/>
<text x="1041.14" y="1115.00" font-size="17" fill="#000" stroke="#000" stroke-width="0.12" textLength="17.77" lengthAdjust="spacingAndGlyphs" style="white-space:pre" >11</text>
<rect x="1101.5" y="1095.5" width="97.0" height="27.0" rx="3.5" fill="url(#gbtn)" stroke="#a19e99"/>
<text x="1140.52" y="1115.00" font-size="17" fill="#000" stroke="#000" stroke-width="0.12" textLength="18.96" lengthAdjust="spacingAndGlyphs" style="white-space:pre" >12</text>
<rect x="1201.5" y="1095.5" width="97.0" height="27.0" rx="3.5" fill="url(#gbtn)" stroke="#a19e99"/>
<text x="1240.52" y="1115.00" font-size="17" fill="#000" stroke="#000" stroke-width="0.12" textLength="18.96" lengthAdjust="spacingAndGlyphs" style="white-space:pre" >13</text>
<rect x="1301.5" y="1095.5" width="97.0" height="27.0" rx="3.5" fill="url(#gbtn)" stroke="#a19e99"/>
<text x="1340.52" y="1115.00" font-size="17" fill="#000" stroke="#000" stroke-width="0.12" textLength="18.96" lengthAdjust="spacingAndGlyphs" style="white-space:pre" >14</text>
<rect x="1401.5" y="1095.5" width="97.0" height="27.0" rx="3.5" fill="url(#gbtn)" stroke="#a19e99"/>
<text x="1440.52" y="1115.00" font-size="17" fill="#000" stroke="#000" stroke-width="0.12" textLength="18.96" lengthAdjust="spacingAndGlyphs" style="white-space:pre" >15</text>
<rect x="1501.5" y="1095.5" width="109.0" height="27.0" rx="3.5" fill="url(#gbtn)" stroke="#a19e99"/>
<text x="1546.52" y="1115.00" font-size="17" fill="#000" stroke="#000" stroke-width="0.12" textLength="18.96" lengthAdjust="spacingAndGlyphs" style="white-space:pre" >16</text>
<rect x="1.5" y="1134.5" width="1610.0" height="39.0" rx="4" fill="none" stroke="#fff" opacity="0.8"/>
<rect x="0.5" y="1133.5" width="1610.0" height="39.0" rx="4" fill="none" stroke="#b3b0ab"/>
<rect x="4" y="1124" width="146" height="12" fill="#edebe9" />
<text x="5.00" y="1137.90" font-size="17" fill="#000" stroke="#000" stroke-width="0.12" textLength="143.55" lengthAdjust="spacingAndGlyphs" style="white-space:pre" >Выбранный канал</text>
<line x1="35.5" y1="1143" x2="35.5" y2="1172" stroke="#c2bfba" stroke-width="1" />
<line x1="36.5" y1="1143" x2="36.5" y2="1172" stroke="#ffffff" stroke-width="1" opacity="0.7"/>
<text x="12.00" y="1162.00" font-size="17" fill="#000" stroke="#000" stroke-width="0.12" textLength="10.52" lengthAdjust="spacingAndGlyphs" style="white-space:pre" >--</text>
<rect x="44.5" y="1143.5" width="432.0" height="27.0" rx="3.5" fill="url(#gbtn)" stroke="#a19e99"/>
<text x="243.50" y="1162.00" font-size="17" fill="#000" stroke="#000" stroke-width="0.12" textLength="31.97" lengthAdjust="spacingAndGlyphs" style="white-space:pre" >------</text>
<rect x="1613.5" y="104.5" width="152.0" height="97.0" rx="4" fill="none" stroke="#fff" opacity="0.8"/>
<rect x="1612.5" y="103.5" width="152.0" height="97.0" rx="4" fill="none" stroke="#b3b0ab"/>
<rect x="1616" y="94" width="118" height="12" fill="#edebe9" />
<text x="1617.10" y="107.40" font-size="17" fill="#000" stroke="#000" stroke-width="0.12" textLength="115.57" lengthAdjust="spacingAndGlyphs" style="white-space:pre" >Режим работы</text>
<circle cx="1623" cy="122.7" r="5.6" fill="#fff" stroke="#8f8c88" stroke-width="1.1"/>
<circle cx="1623" cy="122.7" r="3" fill="#1e1e1e"/>
<circle cx="1622" cy="121.7" r="1" fill="#777"/>
<text x="1636.00" y="127.60" font-size="17" fill="#000" stroke="#000" stroke-width="0.12" textLength="100.41" lengthAdjust="spacingAndGlyphs" style="white-space:pre" >Нормальный</text>
<circle cx="1623" cy="145" r="5.6" fill="#fff" stroke="#8f8c88" stroke-width="1.1"/>
<text x="1636.00" y="149.60" font-size="17" fill="#000" stroke="#000" stroke-width="0.12" textLength="91.69" lengthAdjust="spacingAndGlyphs" style="white-space:pre" >Одиночный</text>
<circle cx="1623" cy="167" r="5.6" fill="#fff" stroke="#8f8c88" stroke-width="1.1"/>
<text x="1636.00" y="171.60" font-size="17" fill="#000" stroke="#000" stroke-width="0.12" textLength="94.65" lengthAdjust="spacingAndGlyphs" style="white-space:pre" >Прокрутить</text>
<circle cx="1623" cy="188.8" r="5.6" fill="#fff" stroke="#8f8c88" stroke-width="1.1"/>
<text x="1636.00" y="193.40" font-size="17" fill="#000" stroke="#000" stroke-width="0.12" textLength="37.13" lengthAdjust="spacingAndGlyphs" style="white-space:pre" >Стоп</text>
<rect x="1613.5" y="213.5" width="152.0" height="960.0" rx="4" fill="none" stroke="#fff" opacity="0.8"/>
<rect x="1612.5" y="212.5" width="152.0" height="960.0" rx="4" fill="none" stroke="#b3b0ab"/>
<rect x="1616" y="203" width="119" height="12" fill="#edebe9" />
<text x="1617.10" y="215.75" font-size="17" fill="#000" stroke="#000" stroke-width="0.12" textLength="116.40" lengthAdjust="spacingAndGlyphs" style="white-space:pre" >Вертикальный</text>
<text x="1613.80" y="233.50" font-size="17" fill="#000" stroke="#000" stroke-width="0.12" textLength="75.17" lengthAdjust="spacingAndGlyphs" style="white-space:pre" >Усиление</text>
<text x="1714.10" y="233.50" font-size="17" fill="#000" stroke="#000" stroke-width="0.12" textLength="24.79" lengthAdjust="spacingAndGlyphs" style="white-space:pre" >Pos</text>
<rect x="1649.5" y="241.5" width="4" height="805.0" fill="#d8d6d3" stroke="#a3a09b"/>
<rect x="1649.5" y="241.5" width="4" height="370.0" fill="#8db1e3" stroke="#5d86c3"/>
<rect x="1645.5" y="611.5" width="12.0" height="20.0" rx="3" fill="url(#ghandle)" stroke="#9b9893"/>
<line x1="1648.5" y1="618.5" x2="1654.5" y2="618.5" stroke="#555" stroke-width="1" />
<line x1="1648.5" y1="621.5" x2="1654.5" y2="621.5" stroke="#555" stroke-width="1" />
<line x1="1648.5" y1="624.5" x2="1654.5" y2="624.5" stroke="#555" stroke-width="1" />
<rect x="1724.5" y="241.5" width="4" height="805.0" fill="#d8d6d3" stroke="#a3a09b"/>
<rect x="1724.5" y="241.5" width="4" height="471.0" fill="#8db1e3" stroke="#5d86c3"/>
<rect x="1720.5" y="712.5" width="12.0" height="20.0" rx="3" fill="url(#ghandle)" stroke="#9b9893"/>
<line x1="1723.5" y1="719.5" x2="1729.5" y2="719.5" stroke="#555" stroke-width="1" />
<line x1="1723.5" y1="722.5" x2="1729.5" y2="722.5" stroke="#555" stroke-width="1" />
<line x1="1723.5" y1="725.5" x2="1729.5" y2="725.5" stroke="#555" stroke-width="1" />
<line x1="1615" y1="1053.5" x2="1763" y2="1053.5" stroke="#c2bfba" stroke-width="1" />
<line x1="1615" y1="1054.5" x2="1763" y2="1054.5" stroke="#ffffff" stroke-width="1" opacity="0.7"/>
<text x="1653.20" y="1072.00" font-size="17" fill="#000" stroke="#000" stroke-width="0.12" textLength="71.03" lengthAdjust="spacingAndGlyphs" style="white-space:pre" >Масштаб</text>
<text x="1679.20" y="1090.00" font-size="17" fill="#000" stroke="#000" stroke-width="0.12" textLength="20.54" lengthAdjust="spacingAndGlyphs" style="white-space:pre" >----</text>
<rect x="1615.5" y="1095.5" width="147.0" height="45.0" rx="3.5" fill="url(#gbtn)" stroke="#a19e99"/>
<text x="1659.80" y="1114.20" font-size="17" fill="#000" stroke="#000" stroke-width="0.12" textLength="56.90" lengthAdjust="spacingAndGlyphs" style="white-space:pre" >Отступ</text>
<text x="1659.80" y="1131.70" font-size="17" fill="#000" stroke="#000" stroke-width="0.12" textLength="44.94" lengthAdjust="spacingAndGlyphs" style="white-space:pre" >0.000</text>
<rect x="1615.5" y="1143.5" width="147.0" height="27.0" rx="3.5" fill="url(#gbtn)" stroke="#a19e99"/>
<text x="1656.20" y="1161.70" font-size="17" fill="#000" stroke="#000" stroke-width="0.12" textLength="66.73" lengthAdjust="spacingAndGlyphs" style="white-space:pre" >Chan Off</text>
<rect x="1803.5" y="104.5" width="80.0" height="1069.0" rx="4" fill="none" stroke="#fff" opacity="0.8"/>
<rect x="1802.5" y="103.5" width="80.0" height="1069.0" rx="4" fill="none" stroke="#b3b0ab"/>
<rect x="1806" y="94" width="56" height="12" fill="#edebe9" />
<text x="1807.30" y="107.40" font-size="17" fill="#000" stroke="#000" stroke-width="0.12" textLength="53.87" lengthAdjust="spacingAndGlyphs" style="white-space:pre" >Запуск</text>
<circle cx="1812.7" cy="122.7" r="5.6" fill="#fff" stroke="#8f8c88" stroke-width="1.1"/>
<circle cx="1812.7" cy="122.7" r="3" fill="#1e1e1e"/>
<circle cx="1811.7" cy="121.7" r="1" fill="#777"/>
<text x="1826.50" y="127.60" font-size="17" fill="#000" stroke="#000" stroke-width="0.12" textLength="53.28" lengthAdjust="spacingAndGlyphs" style="white-space:pre" >Normal</text>
<circle cx="1812.7" cy="145" r="5.6" fill="#fff" stroke="#8f8c88" stroke-width="1.1"/>
<text x="1826.50" y="149.60" font-size="17" fill="#000" stroke="#000" stroke-width="0.12" textLength="36.45" lengthAdjust="spacingAndGlyphs" style="white-space:pre" >Авто</text>
<rect x="1805.5" y="157.5" width="75.0" height="27.0" rx="3.5" fill="url(#gbtn)" stroke="#a19e99"/>
<text x="1823.50" y="175.30" font-size="17" fill="#000" stroke="#000" stroke-width="0.12" textLength="39.36" lengthAdjust="spacingAndGlyphs" style="white-space:pre" >Force</text>
<text x="1803.90" y="199.25" font-size="17" fill="#000" stroke="#000" stroke-width="0.12" textLength="39.04" lengthAdjust="spacingAndGlyphs" style="white-space:pre" >Level</text>
<text x="1849.80" y="199.25" font-size="17" fill="#000" stroke="#000" stroke-width="0.12" textLength="25.09" lengthAdjust="spacingAndGlyphs" style="white-space:pre" >Pos</text>
<rect x="1821.5" y="207.5" width="4" height="839.0" fill="#d8d6d3" stroke="#a3a09b"/>
<rect x="1821.5" y="207.5" width="4" height="409.0" fill="#8db1e3" stroke="#5d86c3"/>
<rect x="1817.5" y="616.5" width="12.0" height="20.0" rx="3" fill="url(#ghandle)" stroke="#9b9893"/>
<line x1="1820.5" y1="623.5" x2="1826.5" y2="623.5" stroke="#555" stroke-width="1" />
<line x1="1820.5" y1="626.5" x2="1826.5" y2="626.5" stroke="#555" stroke-width="1" />
<line x1="1820.5" y1="629.5" x2="1826.5" y2="629.5" stroke="#555" stroke-width="1" />
<rect x="1860.5" y="207.5" width="4" height="839.0" fill="#d8d6d3" stroke="#a3a09b"/>
<rect x="1860.5" y="207.5" width="4" height="39.0" fill="#8db1e3" stroke="#5d86c3"/>
<rect x="1856.5" y="246.5" width="12.0" height="20.0" rx="3" fill="url(#ghandle)" stroke="#9b9893"/>
<line x1="1859.5" y1="253.5" x2="1865.5" y2="253.5" stroke="#555" stroke-width="1" />
<line x1="1859.5" y1="256.5" x2="1865.5" y2="256.5" stroke="#555" stroke-width="1" />
<line x1="1859.5" y1="259.5" x2="1865.5" y2="259.5" stroke="#555" stroke-width="1" />
<line x1="1804" y1="1053.5" x2="1881" y2="1053.5" stroke="#c2bfba" stroke-width="1" />
<line x1="1804" y1="1054.5" x2="1881" y2="1054.5" stroke="#ffffff" stroke-width="1" opacity="0.7"/>
<text x="1823.20" y="1072.00" font-size="17" fill="#000" stroke="#000" stroke-width="0.12" textLength="38.64" lengthAdjust="spacingAndGlyphs" style="white-space:pre" >Level</text>
<text x="1832.80" y="1090.00" font-size="17" fill="#000" stroke="#000" stroke-width="0.12" textLength="20.74" lengthAdjust="spacingAndGlyphs" style="white-space:pre" >----</text>
<rect x="1805.5" y="1095.5" width="75.0" height="27.0" rx="3.5" fill="url(#gbtn)" stroke="#a19e99"/>
<text x="1820.30" y="1114.20" font-size="17" fill="#000" stroke="#000" stroke-width="0.12" textLength="44.94" lengthAdjust="spacingAndGlyphs" style="white-space:pre" >Rising</text>
<rect x="1805.5" y="1125.5" width="75.0" height="45.0" rx="3.5" fill="url(#gbtn)" stroke="#a19e99"/>
<text x="1813.20" y="1143.70" font-size="17" fill="#000" stroke="#000" stroke-width="0.12" textLength="51.97" lengthAdjust="spacingAndGlyphs" style="white-space:pre" >Source</text>
<text x="1813.20" y="1161.70" font-size="17" fill="#000" stroke="#000" stroke-width="0.12" textLength="58.14" lengthAdjust="spacingAndGlyphs" style="white-space:pre" >Chan  3</text>
<rect x="0" y="1174" width="1920" height="26" fill="#000" />
<rect x="0.5" y="1176.5" width="234.0" height="20" rx="3" fill="#000" stroke="#8c8c8c"/>
<rect x="4.5" y="1179.5" width="14" height="13" fill="#2e3436" stroke="#9a9a9a"/>
<path d="M7 1183 l2 1.5 l-2 1.5" stroke="#ccc" fill="none"/>
<text x="22.00" y="1191.00" font-size="15" fill="#cfcfcf" stroke="#cfcfcf" stroke-width="0.12" textLength="208.47" lengthAdjust="spacingAndGlyphs" style="white-space:pre" >serg@lasercnc: ~/linuxcnc/con...</text>
<rect x="241.5" y="1176.5" width="234.0" height="20" rx="3" fill="#000" stroke="#8c8c8c"/>
<circle cx="252" cy="1186.5" r="6.5" fill="#e35f12"/><circle cx="253.5" cy="1185.5" r="4.3" fill="#2f62b8"/><path d="M246.5 1190 c3 3 8 3 11 -2 c-3 2 -7 3 -10 0z" fill="#ffc21a"/>
<text x="262.80" y="1191.00" font-size="15" fill="#cfcfcf" stroke="#cfcfcf" stroke-width="0.12" textLength="211.04" lengthAdjust="spacingAndGlyphs" style="white-space:pre" >Google Переводчик - Mozilla F...</text>
<rect x="482.5" y="1176.5" width="234.0" height="20" rx="3" fill="#000" stroke="#8c8c8c"/>
<circle cx="493" cy="1186.5" r="6.5" fill="#f0e000" stroke="#e04000"/><path d="M491 1190 v-6 l4 6 v-6" stroke="#d02000" fill="none" stroke-width="1.2"/>
<text x="503.80" y="1191.00" font-size="15" fill="#cfcfcf" stroke="#cfcfcf" stroke-width="0.12" textLength="204.96" lengthAdjust="spacingAndGlyphs" style="white-space:pre" >gmoccapy for linuxcnc  1.5.8 (...</text>
<rect x="723.5" y="1176.5" width="234.0" height="20" rx="3" fill="#1a1a1a" stroke="#c8c8c8"/>
<path d="M728 1180.5 h13 v10 l-2 2 h-11 z" fill="#f4f4f4"/>
<text x="745.20" y="1191.00" font-size="15" fill="#ffffff" stroke="#ffffff" stroke-width="0.12" textLength="206.35" lengthAdjust="spacingAndGlyphs" style="white-space:pre" >HAL Осциллограф (на lasercnc)</text>
<rect x="964.5" y="1176.5" width="234.0" height="20" rx="3" fill="#000" stroke="#8c8c8c"/>
<path d="M969 1180.5 h13 v10 l-2 2 h-11 z" fill="#f4f4f4"/>
<text x="985.50" y="1191.00" font-size="15" fill="#cfcfcf" stroke="#cfcfcf" stroke-width="0.12" textLength="120.71" lengthAdjust="spacingAndGlyphs" style="white-space:pre" >HAL Configuration</text>
<rect x="1550.5" y="1174.5" width="40" height="25" fill="#000" stroke="#bdbdbd"/>
<text x="1565.85" y="1191.00" font-size="15" fill="#d8d8d8" stroke="#d8d8d8" stroke-width="0.12" textLength="9.35" lengthAdjust="spacingAndGlyphs" style="white-space:pre" >1</text>
<rect x="1597.5" y="1174.5" width="40" height="25" fill="#000" stroke="#bdbdbd"/>
<text x="1612.85" y="1191.00" font-size="15" fill="#d8d8d8" stroke="#d8d8d8" stroke-width="0.12" textLength="9.35" lengthAdjust="spacingAndGlyphs" style="white-space:pre" >2</text>
<rect x="1644.5" y="1174.5" width="40" height="25" fill="#000" stroke="#bdbdbd"/>
<text x="1659.85" y="1191.00" font-size="15" fill="#d8d8d8" stroke="#d8d8d8" stroke-width="0.12" textLength="9.35" lengthAdjust="spacingAndGlyphs" style="white-space:pre" >3</text>
<rect x="1691.5" y="1174.5" width="40" height="25" fill="#000" stroke="#bdbdbd"/>
<text x="1706.85" y="1191.00" font-size="15" fill="#d8d8d8" stroke="#d8d8d8" stroke-width="0.12" textLength="9.35" lengthAdjust="spacingAndGlyphs" style="white-space:pre" >4</text>
<rect x="1738.5" y="1174.5" width="40" height="25" fill="#000" stroke="#bdbdbd"/>
<text x="1753.85" y="1191.00" font-size="15" fill="#d8d8d8" stroke="#d8d8d8" stroke-width="0.12" textLength="9.35" lengthAdjust="spacingAndGlyphs" style="white-space:pre" >5</text>
<rect x="1785.5" y="1174.5" width="40" height="25" fill="#000" stroke="#bdbdbd"/>
<text x="1800.85" y="1191.00" font-size="15" fill="#d8d8d8" stroke="#d8d8d8" stroke-width="0.12" textLength="9.35" lengthAdjust="spacingAndGlyphs" style="white-space:pre" >6</text>
<rect x="1833.5" y="1174.5" width="38" height="25" fill="#2a2a2a" stroke="#ffffff"/>
<text x="1842.85" y="1191.00" font-size="15" fill="#d8d8d8" stroke="#d8d8d8" stroke-width="0.12" textLength="19.33" lengthAdjust="spacingAndGlyphs" style="white-space:pre" >-7-</text>
<rect x="1879.5" y="1174.5" width="40" height="25" fill="#000" stroke="#bdbdbd"/>
<text x="1894.85" y="1191.00" font-size="15" fill="#d8d8d8" stroke="#d8d8d8" stroke-width="0.12" textLength="9.35" lengthAdjust="spacingAndGlyphs" style="white-space:pre" >8</text>
<path d="M814 186 H821 L825 190 V1093 L821 1097 H814 L810 1093 V190 Z" fill="rgb(0,40,255)" fill-opacity="0.31"/>
<path d="M814 186 H821 L825 190 V197 L821 201 H814 L810 197 V190 Z" fill="rgb(0,40,255)" fill-opacity="0.31"/>
<path d="M850 182 H857 L861 186 V1096 L857 1100 H850 L846 1096 V186 Z" fill="rgb(255,0,230)" fill-opacity="0.31"/>
<path d="M850 1085 H857 L861 1089 V1096 L857 1100 H850 L846 1096 V1089 Z" fill="rgb(255,0,230)" fill-opacity="0.31"/>
<path d="M480 453 H647 L651 457 V464 L647 468 H480 L476 464 V457 Z" fill="rgb(0,40,255)" fill-opacity="0.31"/>
<path d="M480 453 H487 L491 457 V464 L487 468 H480 L476 464 V457 Z" fill="rgb(0,40,255)" fill-opacity="0.31"/>
<path d="M480 544 H647 L651 548 V555 L647 559 H480 L476 555 V548 Z" fill="rgb(255,0,230)" fill-opacity="0.31"/>
<path d="M480 544 H487 L491 548 V555 L487 559 H480 L476 555 V548 Z" fill="rgb(255,0,230)" fill-opacity="0.31"/>
</svg></body></html>
